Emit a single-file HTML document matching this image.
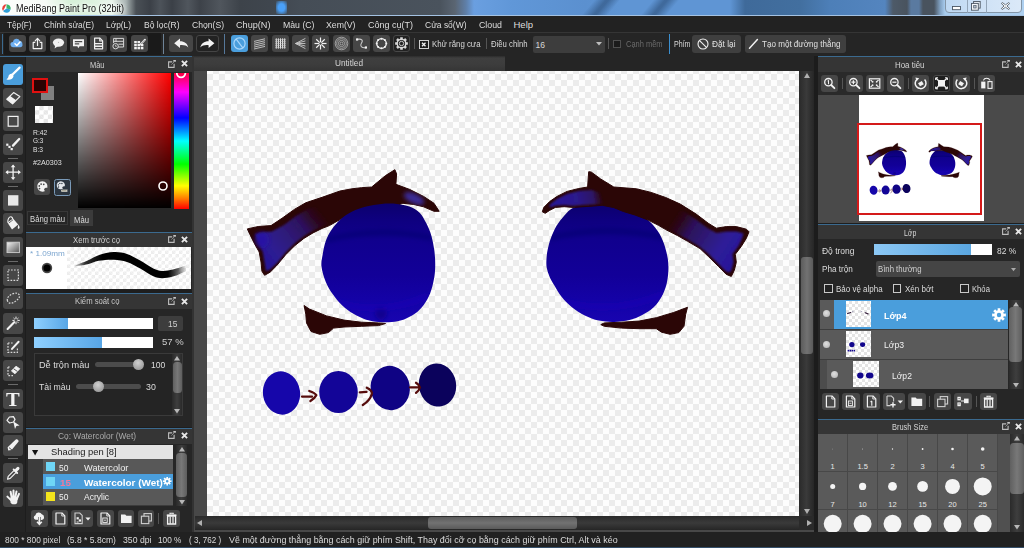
<!DOCTYPE html>
<html><head><meta charset="utf-8"><title>MediBang Paint Pro</title>
<style>
*{box-sizing:border-box;margin:0;padding:0}
html,body{width:1024px;height:548px;overflow:hidden;background:#1e1e1e;font-family:"Liberation Sans","DejaVu Sans",sans-serif;font-size:9px;color:#dcdcdc}
.a{position:absolute}
.t{position:absolute;white-space:nowrap;transform-origin:0 0}
svg{overflow:visible}

</style></head><body>
<div class="a" style="left:0px;top:0px;width:1024px;height:16px;background:linear-gradient(90deg,#fcfefc 0,#f6fbf6 45px,#d6f0d8 70px,#dcf2de 92px,#e8f4ea 112px,#a9b3b3 126px,#4a5056 136px,#3b4047 150px,#4d535a 160px,#3b4047 172px,#50565d 188px,#3d4249 200px,#50565d 220px,#3d434a 240px,#3f464e 270px,#454d56 300px,#4a535d 440px,#5a6572 455px,#5f7fa8 466px,#6a9fe0 474px,#6097d8 512px,#5b90cf 585px,#5f95d4 620px,#5f95d4 730px,#3f6a9a 745px,#426f9f 800px,#4d7fb8 830px,#5485bf 885px,#4d5a68 893px,#49535e 907px,#5a7aa0 911px,#5a7aa0 919px,#49535e 923px,#49535e 934px,#7f9fbf 940px,#a8ccee 945px,#aed0f0 1024px);"></div>
<div class="a" style="left:276px;top:1px;width:11px;height:13px;background:radial-gradient(ellipse at center,#4aa0f8 0,#4aa0f8 40%,rgba(74,160,248,0) 100%);"></div>
<div class="a" style="left:588px;top:0px;width:26px;height:15px;background:linear-gradient(90deg,rgba(58,98,146,0),rgba(58,98,146,.85) 45%,rgba(58,98,146,.85) 55%,rgba(58,98,146,0));transform:skewX(-40deg);"></div>
<div class="a" style="left:647px;top:0px;width:26px;height:15px;background:linear-gradient(90deg,rgba(58,98,146,0),rgba(58,98,146,.85) 45%,rgba(58,98,146,.85) 55%,rgba(58,98,146,0));transform:skewX(-40deg);"></div>
<div class="a" style="left:0px;top:14.7px;width:1024px;height:1.1px;background:#a4c2e2;"></div>
<svg class="a" style="left:1px;top:3px;" width="11" height="11" viewBox="0 0 11 11"><circle cx="5.5" cy="5.5" r="5.3" fill="#fff"/><path d="M5.5 1.2A4.3 4.3 0 0 0 2 8z" fill="#e8413a"/><path d="M5.5 1.2A4.3 4.3 0 0 1 9.6 6.5L5.5 5.5z" fill="#38b56a"/><path d="M2 8A4.3 4.3 0 0 0 9.6 6.5L5.5 5.5z" fill="#2e9fd8"/></svg>
<span class="t" style="left:16.00px;top:3.21px;font-size:10.5px;line-height:10.5px;color:#101010;transform:scaleX(0.8566);text-shadow:0 0 4px #fff,0 0 6px #fff;">MediBang Paint Pro (32bit)</span>
<div class="a" style="left:945px;top:-1px;width:77.4px;height:14.4px;background:linear-gradient(90deg,#bed8f2,#cfe2f6 50%,#dbe9f8);border-radius:0 0 4px 4px;border:1px solid #8496a8;"></div>
<div class="a" style="left:966.5px;top:0px;width:1px;height:13px;background:#93a5b8;"></div>
<div class="a" style="left:986.3px;top:0px;width:1px;height:13px;background:#93a5b8;"></div>
<svg class="a" style="left:952px;top:5.6px;" width="9" height="4.4" viewBox="0 0 9 4.4"><rect x="0.5" y="0.5" width="8" height="3.2" fill="#fff" stroke="#4a5562" stroke-width="0.9"/></svg>
<svg class="a" style="left:971px;top:1.2px;" width="10" height="10" viewBox="0 0 10 10"><rect x="2.6" y="0.5" width="6.6" height="6.6" fill="#e8eef5" stroke="#4a5562" stroke-width="0.9"/><rect x="0.5" y="2.4" width="6.8" height="6.8" fill="#f4f7fa" stroke="#4a5562" stroke-width="0.9"/><rect x="2.7" y="4.6" width="2.4" height="2.4" fill="#b8c6d4" stroke="#4a5562" stroke-width="0.7"/></svg>
<svg class="a" style="left:1000.6px;top:2px;" width="9" height="8" viewBox="0 0 9 8"><path d="M1.2 0.5L4.5 2.8 7.8 0.5 8.6 1.6 5.9 4 8.6 6.4 7.8 7.5 4.5 5.2 1.2 7.5 0.4 6.4 3.1 4 0.4 1.6z" fill="#fff" stroke="#4a5562" stroke-width="0.8" stroke-linejoin="round"/></svg>
<div class="a" style="left:0px;top:16px;width:1024px;height:16px;background:#222222;"></div>
<span class="t" style="left:6.80px;top:20.26px;font-size:9.5px;line-height:9.5px;color:#dedede;transform:scaleX(0.8632);">Tệp(F)</span>
<span class="t" style="left:43.50px;top:20.26px;font-size:9.5px;line-height:9.5px;color:#dedede;transform:scaleX(0.8845);">Chỉnh sửa(E)</span>
<span class="t" style="left:106.00px;top:20.26px;font-size:9.5px;line-height:9.5px;color:#dedede;transform:scaleX(0.8796);">Lớp(L)</span>
<span class="t" style="left:143.50px;top:20.26px;font-size:9.5px;line-height:9.5px;color:#dedede;transform:scaleX(0.8966);">Bộ lọc(R)</span>
<span class="t" style="left:191.50px;top:20.26px;font-size:9.5px;line-height:9.5px;color:#dedede;transform:scaleX(0.9046);">Chọn(S)</span>
<span class="t" style="left:235.50px;top:20.26px;font-size:9.5px;line-height:9.5px;color:#dedede;transform:scaleX(0.9608);">Chụp(N)</span>
<span class="t" style="left:282.50px;top:20.26px;font-size:9.5px;line-height:9.5px;color:#dedede;transform:scaleX(0.9180);">Màu (C)</span>
<span class="t" style="left:326.00px;top:20.26px;font-size:9.5px;line-height:9.5px;color:#dedede;transform:scaleX(0.9161);">Xem(V)</span>
<span class="t" style="left:367.50px;top:20.26px;font-size:9.5px;line-height:9.5px;color:#dedede;transform:scaleX(0.9471);">Công cụ(T)</span>
<span class="t" style="left:424.50px;top:20.26px;font-size:9.5px;line-height:9.5px;color:#dedede;transform:scaleX(0.8928);">Cửa sổ(W)</span>
<span class="t" style="left:478.50px;top:20.26px;font-size:9.5px;line-height:9.5px;color:#dedede;transform:scaleX(0.9264);">Cloud</span>
<span class="t" style="left:513.50px;top:20.26px;font-size:9.5px;line-height:9.5px;color:#dedede;">Help</span>
<div class="a" style="left:0px;top:32px;width:1024px;height:24px;background:#252525;"></div>
<div class="a" style="left:0px;top:32px;width:1024px;height:0.6px;background:#353535;"></div>
<div class="a" style="left:3.5px;top:33px;width:157px;height:22.3px;background:#1a1a1a;"></div>
<div class="a" style="left:2px;top:34px;width:1px;height:20px;background:#3b6a8f;"></div>
<div class="a" style="left:9.0px;top:35.2px;width:17px;height:17.2px;background:#464646;border-radius:3px;"></div>
<div class="a" style="left:29.25px;top:35.2px;width:17px;height:17.2px;background:#464646;border-radius:3px;"></div>
<div class="a" style="left:49.5px;top:35.2px;width:17px;height:17.2px;background:#464646;border-radius:3px;"></div>
<div class="a" style="left:69.75px;top:35.2px;width:17px;height:17.2px;background:#464646;border-radius:3px;"></div>
<div class="a" style="left:90.0px;top:35.2px;width:17px;height:17.2px;background:#464646;border-radius:3px;"></div>
<div class="a" style="left:110.25px;top:35.2px;width:17px;height:17.2px;background:#464646;border-radius:3px;"></div>
<div class="a" style="left:130.5px;top:35.2px;width:17px;height:17.2px;background:#464646;border-radius:3px;"></div>
<div class="a" style="left:163px;top:34px;width:1px;height:20px;background:#6f8498;"></div>
<div class="a" style="left:169.4px;top:35.2px;width:23.4px;height:17.2px;background:#464646;border-radius:3px;"></div>
<div class="a" style="left:196.3px;top:35.2px;width:22.7px;height:17.2px;background:#222;border-radius:3px;border:1px solid #454545;"></div>
<div class="a" style="left:224px;top:34px;width:1px;height:20px;background:#56789a;"></div>
<div class="a" style="left:231.0px;top:35.2px;width:17px;height:17.2px;background:#4a9edc;border-radius:3px;"></div>
<div class="a" style="left:251.3px;top:35.2px;width:17px;height:17.2px;background:#464646;border-radius:3px;"></div>
<div class="a" style="left:271.6px;top:35.2px;width:17px;height:17.2px;background:#464646;border-radius:3px;"></div>
<div class="a" style="left:291.9px;top:35.2px;width:17px;height:17.2px;background:#464646;border-radius:3px;"></div>
<div class="a" style="left:312.2px;top:35.2px;width:17px;height:17.2px;background:#464646;border-radius:3px;"></div>
<div class="a" style="left:332.5px;top:35.2px;width:17px;height:17.2px;background:#464646;border-radius:3px;"></div>
<div class="a" style="left:352.8px;top:35.2px;width:17px;height:17.2px;background:#464646;border-radius:3px;"></div>
<div class="a" style="left:373.1px;top:35.2px;width:17px;height:17.2px;background:#464646;border-radius:3px;"></div>
<div class="a" style="left:393.4px;top:35.2px;width:17px;height:17.2px;background:#222;border-radius:3px;border:1px solid #484848;"></div>
<div class="a" style="left:414px;top:38px;width:1px;height:11px;background:#555;"></div>
<div class="a" style="left:419px;top:39.5px;width:9.5px;height:9px;background:#1b1b1b;border:1px solid #cfcfcf;"></div>
<span class="t" style="left:431.60px;top:40.18px;font-size:9px;line-height:9px;color:#d8d8d8;transform:scaleX(0.8726);">Khử răng cưa</span>
<div class="a" style="left:485.5px;top:38px;width:1px;height:11px;background:#555;"></div>
<span class="t" style="left:491.40px;top:40.18px;font-size:9px;line-height:9px;color:#d8d8d8;transform:scaleX(0.8605);">Điều chỉnh</span>
<div class="a" style="left:532.5px;top:35.5px;width:72px;height:17.5px;background:#3d3d3d;border-radius:2px;"></div>
<span class="t" style="left:535.50px;top:40.60px;font-size:8.5px;line-height:8.5px;color:#d8d8d8;">16</span>
<svg class="a" style="left:596px;top:42px;" width="6" height="4" viewBox="0 0 6 4"><path d="M0 0H6L3 3.5z" fill="#bdbdbd"/></svg>
<div class="a" style="left:607.5px;top:38px;width:1px;height:11px;background:#555;"></div>
<div class="a" style="left:613px;top:40px;width:8px;height:8px;background:#1b1b1b;border:1px solid #505050;"></div>
<span class="t" style="left:625.60px;top:40.18px;font-size:9px;line-height:9px;color:#6b6b6b;transform:scaleX(0.8293);">Cạnh mềm</span>
<div class="a" style="left:669px;top:34px;width:1px;height:20px;background:#3b8fcf;"></div>
<span class="t" style="left:674.00px;top:40.18px;font-size:9px;line-height:9px;color:#d8d8d8;transform:scaleX(0.7851);">Phím</span>
<div class="a" style="left:692px;top:35px;width:49px;height:17.5px;background:#3f3f3f;border-radius:3px;"></div>
<span class="t" style="left:712.00px;top:40.18px;font-size:9px;line-height:9px;color:#e0e0e0;transform:scaleX(0.9210);">Đặt lại</span>
<div class="a" style="left:744.5px;top:35px;width:101px;height:17.5px;background:#3f3f3f;border-radius:3px;"></div>
<span class="t" style="left:762.00px;top:40.18px;font-size:9px;line-height:9px;color:#e0e0e0;transform:scaleX(0.8973);">Tạo một đường thẳng</span>
<div class="a" style="left:0px;top:56px;width:26px;height:476px;background:#242424;"></div>
<div class="a" style="left:24.8px;top:56px;width:1.4px;height:476px;background:#1d1d1d;"></div>
<div class="a" style="left:0px;top:56px;width:26px;height:1px;background:#3b6a8f;"></div>
<div class="a" style="left:3px;top:64.3px;width:20.3px;height:20.5px;background:#4a9edc;border-radius:3px;"></div>
<div class="a" style="left:3px;top:87.7px;width:20.3px;height:20.5px;background:#474747;border-radius:3px;"></div>
<div class="a" style="left:3px;top:110.9px;width:20.3px;height:20.5px;background:#474747;border-radius:3px;"></div>
<div class="a" style="left:3px;top:134.2px;width:20.3px;height:20.5px;background:#474747;border-radius:3px;"></div>
<div class="a" style="left:3px;top:162.3px;width:20.3px;height:20.5px;background:#474747;border-radius:3px;"></div>
<div class="a" style="left:3px;top:190.2px;width:20.3px;height:20.5px;background:#474747;border-radius:3px;"></div>
<div class="a" style="left:3px;top:213.4px;width:20.3px;height:20.5px;background:#474747;border-radius:3px;"></div>
<div class="a" style="left:3px;top:236.6px;width:20.3px;height:20.5px;background:#474747;border-radius:3px;"></div>
<div class="a" style="left:3px;top:265px;width:20.3px;height:20.5px;background:#474747;border-radius:3px;"></div>
<div class="a" style="left:3px;top:288.2px;width:20.3px;height:20.5px;background:#474747;border-radius:3px;"></div>
<div class="a" style="left:3px;top:313.3px;width:20.3px;height:20.5px;background:#474747;border-radius:3px;"></div>
<div class="a" style="left:3px;top:336.8px;width:20.3px;height:20.5px;background:#474747;border-radius:3px;"></div>
<div class="a" style="left:3px;top:360.3px;width:20.3px;height:20.5px;background:#474747;border-radius:3px;"></div>
<div class="a" style="left:3px;top:388.7px;width:20.3px;height:20.5px;background:#474747;border-radius:3px;"></div>
<div class="a" style="left:3px;top:412px;width:20.3px;height:20.5px;background:#474747;border-radius:3px;"></div>
<div class="a" style="left:3px;top:435.2px;width:20.3px;height:20.5px;background:#474747;border-radius:3px;"></div>
<div class="a" style="left:3px;top:462.8px;width:20.3px;height:20.5px;background:#474747;border-radius:3px;"></div>
<div class="a" style="left:3px;top:486.5px;width:20.3px;height:20.5px;background:#474747;border-radius:3px;"></div>
<div class="a" style="left:8px;top:158.3px;width:10px;height:1px;background:#6a6a6a;"></div>
<div class="a" style="left:8px;top:186px;width:10px;height:1px;background:#6a6a6a;"></div>
<div class="a" style="left:8px;top:260.5px;width:10px;height:1px;background:#6a6a6a;"></div>
<div class="a" style="left:8px;top:384px;width:10px;height:1px;background:#6a6a6a;"></div>
<div class="a" style="left:8px;top:458.3px;width:10px;height:1px;background:#6a6a6a;"></div>
<div class="a" style="left:26px;top:56px;width:165.5px;height:175.5px;background:#262626;"></div>
<div class="a" style="left:26px;top:56px;width:165.5px;height:16px;background:#353535;"></div>
<div class="a" style="left:26px;top:56px;width:165.5px;height:1px;background:#3b6a8f;"></div>
<svg class="a" style="left:168.2px;top:59.8px;" width="8" height="8" viewBox="0 0 8 8"><path d="M4.2 1.9H0.6V7.4H6.1V3.8" fill="none" stroke="#bdbdbd" stroke-width="1.1"/><rect x="5.3" y="0" width="2.6" height="1.7" fill="#c8c8c8"/><path d="M3.4 4.6L6 2" stroke="#9a9a9a" stroke-width="0.8"/></svg>
<svg class="a" style="left:180.79999999999998px;top:60.4px;" width="7" height="7" viewBox="0 0 7 7"><path d="M0.9 0.9L6.1 6.1M6.1 0.9L0.9 6.1" stroke="#e8e8e8" stroke-width="1.9"/></svg>
<span class="t" style="left:89.75px;top:61.18px;font-size:9px;line-height:9px;color:#d0d0d0;transform:scaleX(0.8278);">Màu</span>
<div class="a" style="left:26px;top:231.5px;width:165.5px;height:57.5px;background:#262626;"></div>
<div class="a" style="left:26px;top:231.5px;width:165.5px;height:15px;background:#353535;"></div>
<div class="a" style="left:26px;top:231.5px;width:165.5px;height:1px;background:#3b6a8f;"></div>
<svg class="a" style="left:168.2px;top:235.3px;" width="8" height="8" viewBox="0 0 8 8"><path d="M4.2 1.9H0.6V7.4H6.1V3.8" fill="none" stroke="#bdbdbd" stroke-width="1.1"/><rect x="5.3" y="0" width="2.6" height="1.7" fill="#c8c8c8"/><path d="M3.4 4.6L6 2" stroke="#9a9a9a" stroke-width="0.8"/></svg>
<svg class="a" style="left:180.79999999999998px;top:235.9px;" width="7" height="7" viewBox="0 0 7 7"><path d="M0.9 0.9L6.1 6.1M6.1 0.9L0.9 6.1" stroke="#e8e8e8" stroke-width="1.9"/></svg>
<div class="a" style="left:26px;top:293.4px;width:165.5px;height:134px;background:#262626;"></div>
<div class="a" style="left:26px;top:293.4px;width:165.5px;height:16px;background:#353535;"></div>
<div class="a" style="left:26px;top:293.4px;width:165.5px;height:1px;background:#3b6a8f;"></div>
<svg class="a" style="left:168.2px;top:297.2px;" width="8" height="8" viewBox="0 0 8 8"><path d="M4.2 1.9H0.6V7.4H6.1V3.8" fill="none" stroke="#bdbdbd" stroke-width="1.1"/><rect x="5.3" y="0" width="2.6" height="1.7" fill="#c8c8c8"/><path d="M3.4 4.6L6 2" stroke="#9a9a9a" stroke-width="0.8"/></svg>
<svg class="a" style="left:180.79999999999998px;top:297.8px;" width="7" height="7" viewBox="0 0 7 7"><path d="M0.9 0.9L6.1 6.1M6.1 0.9L0.9 6.1" stroke="#e8e8e8" stroke-width="1.9"/></svg>
<div class="a" style="left:26px;top:427.6px;width:165.5px;height:104.4px;background:#262626;"></div>
<div class="a" style="left:26px;top:427.6px;width:165.5px;height:16px;background:#353535;"></div>
<div class="a" style="left:26px;top:427.6px;width:165.5px;height:1px;background:#3b6a8f;"></div>
<svg class="a" style="left:168.2px;top:431.40000000000003px;" width="8" height="8" viewBox="0 0 8 8"><path d="M4.2 1.9H0.6V7.4H6.1V3.8" fill="none" stroke="#bdbdbd" stroke-width="1.1"/><rect x="5.3" y="0" width="2.6" height="1.7" fill="#c8c8c8"/><path d="M3.4 4.6L6 2" stroke="#9a9a9a" stroke-width="0.8"/></svg>
<svg class="a" style="left:180.79999999999998px;top:432.00000000000006px;" width="7" height="7" viewBox="0 0 7 7"><path d="M0.9 0.9L6.1 6.1M6.1 0.9L0.9 6.1" stroke="#e8e8e8" stroke-width="1.9"/></svg>
<div class="a" style="left:191.5px;top:56px;width:2.5px;height:476px;background:#333;"></div>
<div class="a" style="left:193.8px;top:56px;width:622.2px;height:476px;background:#484848;"></div>
<div class="a" style="left:194px;top:56px;width:622px;height:15px;background:#252525;"></div>
<div class="a" style="left:194px;top:56px;width:311px;height:14.7px;background:linear-gradient(#2c2c2c 0,#3f3f3f 14%,#3c3c3c 60%,#353535);"></div>
<span class="t" style="left:335.00px;top:59.28px;font-size:9px;line-height:9px;color:#d6d6d6;transform:scaleX(0.9176);">Untitled</span>
<div class="a" style="left:207px;top:71px;width:592px;height:445px;background:repeating-conic-gradient(#ececec 0 25%,#fdfdfd 0 50%) 6px 3px/12px 12px;"></div>
<div class="a" style="left:817.5px;top:56.3px;width:208px;height:167.2px;background:#262626;"></div>
<div class="a" style="left:817.5px;top:56.3px;width:208px;height:15.5px;background:#353535;"></div>
<div class="a" style="left:817.5px;top:56.3px;width:208px;height:1px;background:#3b6a8f;"></div>
<svg class="a" style="left:1002.2px;top:60.099999999999994px;" width="8" height="8" viewBox="0 0 8 8"><path d="M4.2 1.9H0.6V7.4H6.1V3.8" fill="none" stroke="#bdbdbd" stroke-width="1.1"/><rect x="5.3" y="0" width="2.6" height="1.7" fill="#c8c8c8"/><path d="M3.4 4.6L6 2" stroke="#9a9a9a" stroke-width="0.8"/></svg>
<svg class="a" style="left:1014.8000000000001px;top:60.699999999999996px;" width="7" height="7" viewBox="0 0 7 7"><path d="M0.9 0.9L6.1 6.1M6.1 0.9L0.9 6.1" stroke="#e8e8e8" stroke-width="1.9"/></svg>
<div class="a" style="left:817.5px;top:223.5px;width:208px;height:195px;background:#262626;"></div>
<div class="a" style="left:817.5px;top:223.5px;width:208px;height:15.5px;background:#353535;"></div>
<div class="a" style="left:817.5px;top:223.5px;width:208px;height:1px;background:#3b6a8f;"></div>
<svg class="a" style="left:1002.2px;top:227.3px;" width="8" height="8" viewBox="0 0 8 8"><path d="M4.2 1.9H0.6V7.4H6.1V3.8" fill="none" stroke="#bdbdbd" stroke-width="1.1"/><rect x="5.3" y="0" width="2.6" height="1.7" fill="#c8c8c8"/><path d="M3.4 4.6L6 2" stroke="#9a9a9a" stroke-width="0.8"/></svg>
<svg class="a" style="left:1014.8000000000001px;top:227.9px;" width="7" height="7" viewBox="0 0 7 7"><path d="M0.9 0.9L6.1 6.1M6.1 0.9L0.9 6.1" stroke="#e8e8e8" stroke-width="1.9"/></svg>
<div class="a" style="left:817.5px;top:418.5px;width:208px;height:113.5px;background:#262626;"></div>
<div class="a" style="left:817.5px;top:418.5px;width:208px;height:15.5px;background:#353535;"></div>
<div class="a" style="left:817.5px;top:418.5px;width:208px;height:1px;background:#3b6a8f;"></div>
<svg class="a" style="left:1002.2px;top:422.3px;" width="8" height="8" viewBox="0 0 8 8"><path d="M4.2 1.9H0.6V7.4H6.1V3.8" fill="none" stroke="#bdbdbd" stroke-width="1.1"/><rect x="5.3" y="0" width="2.6" height="1.7" fill="#c8c8c8"/><path d="M3.4 4.6L6 2" stroke="#9a9a9a" stroke-width="0.8"/></svg>
<svg class="a" style="left:1014.8000000000001px;top:422.90000000000003px;" width="7" height="7" viewBox="0 0 7 7"><path d="M0.9 0.9L6.1 6.1M6.1 0.9L0.9 6.1" stroke="#e8e8e8" stroke-width="1.9"/></svg>
<div class="a" style="left:0px;top:531.7px;width:1024px;height:16.3px;background:#212121;"></div>
<span class="t" style="left:4.70px;top:535.68px;font-size:9px;line-height:9px;color:#dcdcdc;transform:scaleX(0.9287);">800 * 800 pixel</span>
<span class="t" style="left:66.80px;top:535.68px;font-size:9px;line-height:9px;color:#dcdcdc;transform:scaleX(0.9489);">(5.8 * 5.8cm)</span>
<span class="t" style="left:123.00px;top:535.68px;font-size:9px;line-height:9px;color:#dcdcdc;transform:scaleX(0.9651);">350 dpi</span>
<span class="t" style="left:158.20px;top:535.68px;font-size:9px;line-height:9px;color:#dcdcdc;transform:scaleX(0.9204);">100 %</span>
<span class="t" style="left:189.00px;top:535.68px;font-size:9px;line-height:9px;color:#dcdcdc;transform:scaleX(0.8937);">( 3, 762 )</span>
<span class="t" style="left:229.40px;top:535.68px;font-size:9px;line-height:9px;color:#dcdcdc;transform:scaleX(0.9903);">Vẽ một đường thẳng bằng cách giữ phím Shift, Thay đổi cỡ cọ bằng cách giữ phím Ctrl, Alt và kéo</span>
<div class="a" style="left:0px;top:546.5px;width:1024px;height:1.5px;background:#35506b;"></div>
<div class="a" style="left:799px;top:516px;width:15px;height:14.4px;background:#2a2a2a;"></div>
<div class="a" style="left:799px;top:71px;width:15px;height:445px;background:linear-gradient(90deg,#2a2a2a,#3a3a3a 50%,#262626);"></div>
<div class="a" style="left:800.6px;top:257px;width:12.2px;height:96.6px;background:linear-gradient(90deg,#5c5c5c,#727272 50%,#5a5a5a);border-radius:3px;"></div>
<svg class="a" style="left:803.5px;top:72.5px;" width="6" height="5" viewBox="0 0 6 5"><path d="M0 5L3 0 6 5z" fill="#b0b0b0"/></svg>
<svg class="a" style="left:803.5px;top:509px;" width="6" height="5" viewBox="0 0 6 5"><path d="M0 0L3 5 6 0z" fill="#b0b0b0"/></svg>
<div class="a" style="left:194.6px;top:516px;width:604.4px;height:14.4px;background:linear-gradient(#2a2a2a,#3a3a3a 50%,#262626);"></div>
<div class="a" style="left:427.5px;top:517.2px;width:149.2px;height:12.3px;background:linear-gradient(#5c5c5c,#727272 50%,#5a5a5a);border-radius:3px;"></div>
<svg class="a" style="left:196.5px;top:520px;" width="5" height="6" viewBox="0 0 5 6"><path d="M5 0L0 3 5 6z" fill="#b0b0b0"/></svg>
<svg class="a" style="left:807px;top:520px;" width="5" height="6" viewBox="0 0 5 6"><path d="M0 0L5 3 0 6z" fill="#b0b0b0"/></svg>
<div class="a" style="left:814px;top:56px;width:4px;height:476px;background:#1c1c1c;"></div>
<div class="a" style="left:40.5px;top:85.5px;width:13.5px;height:14.3px;background:#808080;"></div>
<div class="a" style="left:32.4px;top:78px;width:15.3px;height:15.3px;background:#2a0303;border:2px solid #e01010;"></div>
<div class="a" style="left:35px;top:106.3px;width:17.5px;height:17.2px;background-color:#fff;background-image:linear-gradient(45deg,#e6e6e6 25%,transparent 25%,transparent 75%,#e6e6e6 75%),linear-gradient(45deg,#e6e6e6 25%,transparent 25%,transparent 75%,#e6e6e6 75%);background-size:8.6px 8.6px;background-position:0 0,4.3px 4.3px;"></div>
<span class="t" style="left:32.60px;top:129.44px;font-size:7.4px;line-height:7.4px;color:#e0e0e0;transform:scaleX(0.9152);">R:42</span>
<span class="t" style="left:32.60px;top:137.24px;font-size:7.4px;line-height:7.4px;color:#e0e0e0;transform:scaleX(0.8723);">G:3</span>
<span class="t" style="left:32.60px;top:145.84px;font-size:7.4px;line-height:7.4px;color:#e0e0e0;transform:scaleX(0.9104);">B:3</span>
<span class="t" style="left:32.60px;top:159.14px;font-size:7.4px;line-height:7.4px;color:#e0e0e0;transform:scaleX(0.9698);">#2A0303</span>
<div class="a" style="left:33.8px;top:178.8px;width:16.7px;height:16.6px;background:#474747;border-radius:3px;"></div>
<div class="a" style="left:54px;top:178.8px;width:17.4px;height:16.9px;background:#2c3640;border-radius:2.5px;border:1px solid #7a9ab8;"></div>
<div class="a" style="left:77.5px;top:73px;width:93.5px;height:134.5px;background:linear-gradient(to top,#000,rgba(0,0,0,0)),linear-gradient(to right,#fff,#f00);"></div>
<svg class="a" style="left:156.5px;top:180px;" width="12" height="12" viewBox="0 0 12 12"><circle cx="6" cy="6" r="4" fill="none" stroke="#fff" stroke-width="1.6"/></svg>
<div class="a" style="left:174.4px;top:73px;width:14.2px;height:136px;background:linear-gradient(to bottom,#ff0040 0,#ff00ff 14%,#0000ff 33%,#00ffff 50%,#00ff00 67%,#ffff00 83%,#ff8000 92%,#ff0000 100%);"></div>
<svg class="a" style="left:174.4px;top:73px;overflow:hidden" width="14.2" height="12" viewBox="0 0 14.2 12"><circle cx="7.1" cy="0" r="4.3" fill="none" stroke="#fff" stroke-width="1.7"/></svg>
<div class="a" style="left:27.4px;top:210.5px;width:41px;height:14.5px;background:#252525;border:1px solid #383838;"></div>
<div class="a" style="left:69.7px;top:210px;width:23.3px;height:16.3px;background:#3b3b3b;"></div>
<span class="t" style="left:30.20px;top:215.30px;font-size:8.5px;line-height:8.5px;color:#dcdcdc;transform:scaleX(0.9058);">Bảng màu</span>
<span class="t" style="left:73.80px;top:215.90px;font-size:8.5px;line-height:8.5px;color:#dcdcdc;transform:scaleX(0.9005);">Màu</span>
<span class="t" style="left:73.00px;top:236.28px;font-size:9px;line-height:9px;color:#d0d0d0;transform:scaleX(0.8555);">Xem trước cọ</span>
<div class="a" style="left:26.3px;top:247px;width:40.7px;height:41.7px;background:#fff;"></div>
<div class="a" style="left:67px;top:247px;width:124px;height:41.7px;background-color:#fff;background-image:linear-gradient(45deg,#ededed 25%,transparent 25%,transparent 75%,#ededed 75%),linear-gradient(45deg,#ededed 25%,transparent 25%,transparent 75%,#ededed 75%);background-size:7px 7px;background-position:0 0,3.5px 3.5px;"></div>
<span class="t" style="left:30.20px;top:250.33px;font-size:8px;line-height:8px;color:#7da6cf;transform:scaleX(1.0165);">* 1.09mm</span>
<svg class="a" style="left:40px;top:261px;" width="14" height="14" viewBox="0 0 14 14"><defs><filter id="bd"><feGaussianBlur stdDeviation="0.5"/></filter></defs><circle cx="7" cy="7" r="5.2" fill="#444" filter="url(#bd)"/><circle cx="7" cy="7" r="3.6" fill="#000"/></svg>
<svg class="a" style="left:67px;top:247px;overflow:hidden" width="124" height="41.7" viewBox="67 247 124 41.7"><defs><filter id="bs" x="-10%" y="-50%" width="120%" height="200%"><feGaussianBlur stdDeviation="0.6"/></filter><linearGradient id="sg" x1="74" x2="186" gradientUnits="userSpaceOnUse"><stop offset="0" stop-color="#000" stop-opacity="0.1"/><stop offset="0.1" stop-color="#000" stop-opacity="0.8"/><stop offset="0.25" stop-color="#000"/><stop offset="0.84" stop-color="#000"/><stop offset="0.93" stop-color="#000" stop-opacity="0.6"/><stop offset="1" stop-color="#000" stop-opacity="0.05"/></linearGradient></defs><path d="M75.0 265.5C77.1 264.7 83.7 262.2 87.6 260.5C91.5 258.8 94.2 256.6 98.6 255.2C103.0 253.8 109.2 252.3 113.9 252.1C118.6 251.9 122.6 252.6 127.0 254.0C131.4 255.4 135.8 258.2 140.2 260.6C144.6 263.0 149.7 266.8 153.3 268.5C157.0 270.2 158.8 270.8 162.1 271.0C165.4 271.2 169.0 270.5 173.0 269.6C177.0 268.7 183.8 266.3 186.0 265.6L186.0 271.3C183.8 272.2 177.0 275.5 173.0 276.6C169.0 277.8 165.4 278.2 162.1 278.2C158.8 278.1 157.0 277.9 153.3 276.3C149.7 274.7 144.6 271.0 140.2 268.6C135.8 266.2 131.4 263.5 127.0 262.0C122.6 260.5 118.6 259.9 113.9 259.7C109.2 259.5 103.0 260.0 98.6 260.8C94.2 261.6 91.5 263.4 87.6 264.3C83.7 265.2 77.1 266.1 75.0 266.5Z" fill="url(#sg)" filter="url(#bs)"/></svg>
<span class="t" style="left:74.70px;top:297.48px;font-size:9px;line-height:9px;color:#c8c8c8;transform:scaleX(0.8553);">Kiểm soát cọ</span>
<div class="a" style="left:33.5px;top:318px;width:119.5px;height:11.1px;background:#fff;"></div>
<div class="a" style="left:33.5px;top:318px;width:34px;height:11.1px;background:linear-gradient(90deg,#8fd0ff,#58a6e6);"></div>
<div class="a" style="left:157.9px;top:316.3px;width:25.4px;height:14.7px;background:#3d3d3d;border-radius:2px;"></div>
<span class="t" style="left:168.20px;top:320.38px;font-size:9px;line-height:9px;color:#cfcfcf;transform:scaleX(0.9385);">15</span>
<div class="a" style="left:33.5px;top:336.8px;width:119.5px;height:11px;background:#fff;"></div>
<div class="a" style="left:33.5px;top:336.8px;width:68.3px;height:11px;background:linear-gradient(90deg,#8fd0ff,#58a6e6);"></div>
<span class="t" style="left:161.60px;top:338.38px;font-size:9px;line-height:9px;color:#cfcfcf;transform:scaleX(1.0577);">57 %</span>
<div class="a" style="left:33.5px;top:353.3px;width:149.8px;height:62.7px;background:#242424;border:1px solid #3a3a3a;"></div>
<span class="t" style="left:39.00px;top:360.98px;font-size:9px;line-height:9px;color:#dcdcdc;transform:scaleX(1.0175);">Dễ trộn màu</span>
<div class="a" style="left:95.1px;top:361.5px;width:48px;height:5.6px;background:#4c4c4c;border-radius:3px;"></div>
<div class="a" style="left:133.3px;top:358.9px;width:10.8px;height:10.8px;background:radial-gradient(circle at 45% 35%,#d0d0d0,#8a8a8a);border-radius:50%;"></div>
<span class="t" style="left:150.50px;top:360.98px;font-size:9px;line-height:9px;color:#dcdcdc;transform:scaleX(0.9514);">100</span>
<span class="t" style="left:39.00px;top:382.68px;font-size:9px;line-height:9px;color:#dcdcdc;transform:scaleX(0.9688);">Tài màu</span>
<div class="a" style="left:76.1px;top:383.7px;width:64.6px;height:5.6px;background:#4c4c4c;border-radius:3px;"></div>
<div class="a" style="left:92.9px;top:381.1px;width:10.8px;height:10.8px;background:radial-gradient(circle at 45% 35%,#d0d0d0,#8a8a8a);border-radius:50%;"></div>
<span class="t" style="left:145.60px;top:382.68px;font-size:9px;line-height:9px;color:#dcdcdc;transform:scaleX(0.9785);">30</span>
<div class="a" style="left:172.2px;top:354.3px;width:10.3px;height:60.7px;background:linear-gradient(90deg,#2a2a2a,#3e3e3e 50%,#2a2a2a);"></div>
<div class="a" style="left:172.5px;top:361.9px;width:9.700000000000001px;height:30.80000000000001px;background:linear-gradient(90deg,#606060,#787878 50%,#5e5e5e);border-radius:3.5px;"></div>
<svg class="a" style="left:174.35px;top:356.3px;" width="6" height="4.5" viewBox="0 0 6 4.5"><path d="M0 4.5L3 0 6 4.5z" fill="#b8b8b8"/></svg>
<svg class="a" style="left:174.35px;top:408.5px;" width="6" height="4.5" viewBox="0 0 6 4.5"><path d="M0 0L3 4.5 6 0z" fill="#b8b8b8"/></svg>
<span class="t" style="left:57.70px;top:431.88px;font-size:9px;line-height:9px;color:#ababab;transform:scaleX(0.9284);">Cọ: Watercolor (Wet)</span>
<div class="a" style="left:28.1px;top:445px;width:145.3px;height:61.4px;background:#3c3c3c;"></div>
<div class="a" style="left:28.1px;top:445px;width:145.3px;height:14px;background:#e4e4e4;"></div>
<svg class="a" style="left:32.3px;top:449.5px;" width="6.2" height="5.4" viewBox="0 0 6.2 5.4"><path d="M0 0H6.2L3.1 5.4z" fill="#111"/></svg>
<span class="t" style="left:50.80px;top:448.38px;font-size:9px;line-height:9px;color:#1a1a1a;transform:scaleX(1.0418);">Shading pen [8]</span>
<div class="a" style="left:43.4px;top:459px;width:130px;height:14.9px;background:#585858;"></div>
<div class="a" style="left:45.9px;top:462.3px;width:9.3px;height:9.1px;background:#6fd6f6;"></div>
<span class="t" style="left:59.40px;top:463.68px;font-size:9px;line-height:9px;color:#f0f0f0;transform:scaleX(0.9385);">50</span>
<span class="t" style="left:83.50px;top:463.68px;font-size:9px;line-height:9px;color:#f0f0f0;transform:scaleX(1.0281);">Watercolor</span>
<div class="a" style="left:43.4px;top:473.9px;width:130px;height:15.2px;background:#4a9edc;"></div>
<div class="a" style="left:45.9px;top:476.8px;width:9.3px;height:9.1px;background:#6fd6f6;"></div>
<span class="t" style="left:60.10px;top:477.96px;font-size:9.5px;line-height:9.5px;color:#ee7a9e;font-weight:bold;transform:scaleX(1.0304);">15</span>
<span class="t" style="left:83.50px;top:477.96px;font-size:9.5px;line-height:9.5px;color:#ffffff;font-weight:bold;transform:scaleX(1.0439);">Watercolor (Wet)</span>
<div class="a" style="left:43.4px;top:489.1px;width:130px;height:15.6px;background:#585858;"></div>
<div class="a" style="left:45.9px;top:491.8px;width:9.3px;height:9.1px;background:#f4e41c;"></div>
<span class="t" style="left:59.40px;top:493.48px;font-size:9px;line-height:9px;color:#f0f0f0;transform:scaleX(0.9385);">50</span>
<span class="t" style="left:83.50px;top:493.48px;font-size:9px;line-height:9px;color:#f0f0f0;transform:scaleX(0.9472);">Acrylic</span>
<div class="a" style="left:175.6px;top:445px;width:11.8px;height:61.4px;background:linear-gradient(90deg,#2a2a2a,#3e3e3e 50%,#2a2a2a);"></div>
<div class="a" style="left:175.9px;top:453px;width:11.200000000000001px;height:44px;background:linear-gradient(90deg,#606060,#787878 50%,#5e5e5e);border-radius:3.5px;"></div>
<svg class="a" style="left:178.5px;top:447px;" width="6" height="4.5" viewBox="0 0 6 4.5"><path d="M0 4.5L3 0 6 4.5z" fill="#b8b8b8"/></svg>
<svg class="a" style="left:178.5px;top:499.9px;" width="6" height="4.5" viewBox="0 0 6 4.5"><path d="M0 0L3 4.5 6 0z" fill="#b8b8b8"/></svg>
<div class="a" style="left:31.1px;top:510.3px;width:16.5px;height:16.5px;background:#474747;border-radius:3px;"></div>
<div class="a" style="left:51.5px;top:510.3px;width:16px;height:16.5px;background:#474747;border-radius:3px;"></div>
<div class="a" style="left:71.2px;top:510.3px;width:22.2px;height:16.5px;background:#474747;border-radius:3px;"></div>
<div class="a" style="left:97.1px;top:510.3px;width:16.5px;height:16.5px;background:#474747;border-radius:3px;"></div>
<div class="a" style="left:117.8px;top:510.3px;width:16.2px;height:16.5px;background:#474747;border-radius:3px;"></div>
<div class="a" style="left:137.7px;top:510.3px;width:16.5px;height:16.5px;background:#474747;border-radius:3px;"></div>
<div class="a" style="left:162.8px;top:510.3px;width:16.8px;height:16.5px;background:#474747;border-radius:3px;"></div>
<div class="a" style="left:158.4px;top:513px;width:1px;height:11px;background:#555;"></div>
<span class="t" style="left:894.75px;top:61.48px;font-size:9px;line-height:9px;color:#d6d6d6;transform:scaleX(0.8798);">Hoa tiêu</span>
<div class="a" style="left:818px;top:72px;width:206px;height:22.5px;background:#2a2a2a;"></div>
<div class="a" style="left:820.5px;top:75.3px;width:17.5px;height:16.7px;background:#474747;border-radius:3px;"></div>
<div class="a" style="left:846px;top:75.3px;width:17.3px;height:16.7px;background:#474747;border-radius:3px;"></div>
<div class="a" style="left:866.4px;top:75.3px;width:17.2px;height:16.7px;background:#474747;border-radius:3px;"></div>
<div class="a" style="left:887px;top:75.3px;width:16.7px;height:16.7px;background:#474747;border-radius:3px;"></div>
<div class="a" style="left:912px;top:75.3px;width:17.3px;height:16.7px;background:#474747;border-radius:3px;"></div>
<div class="a" style="left:932.8px;top:75.3px;width:16.9px;height:16.7px;background:#1e1e1e;border-radius:3px;border:1px solid #484848;"></div>
<div class="a" style="left:953px;top:75.3px;width:17px;height:16.7px;background:#474747;border-radius:3px;"></div>
<div class="a" style="left:978px;top:75.3px;width:17.4px;height:16.7px;background:#474747;border-radius:3px;"></div>
<div class="a" style="left:841.8px;top:78px;width:1px;height:11px;background:#555;"></div>
<div class="a" style="left:907.8px;top:78px;width:1px;height:11px;background:#555;"></div>
<div class="a" style="left:974px;top:78px;width:1px;height:11px;background:#555;"></div>
<div class="a" style="left:818px;top:94.5px;width:206px;height:128.5px;background:#4a4a4a;"></div>
<div class="a" style="left:858.7px;top:95px;width:125px;height:125.5px;background:#fff;"></div>
<span class="t" style="left:903.65px;top:228.78px;font-size:9px;line-height:9px;color:#d6d6d6;transform:scaleX(0.7725);">Lớp</span>
<span class="t" style="left:821.70px;top:246.88px;font-size:9px;line-height:9px;color:#dcdcdc;transform:scaleX(0.9412);">Độ trong</span>
<div class="a" style="left:874.3px;top:244.4px;width:117.7px;height:11.1px;background:#fff;"></div>
<div class="a" style="left:874.3px;top:244.4px;width:97.1px;height:11.1px;background:linear-gradient(90deg,#8cc8f5,#5aa6e0);"></div>
<span class="t" style="left:996.80px;top:246.88px;font-size:9px;line-height:9px;color:#dcdcdc;transform:scaleX(0.9359);">82 %</span>
<span class="t" style="left:821.70px;top:265.38px;font-size:9px;line-height:9px;color:#dcdcdc;transform:scaleX(0.9080);">Pha trộn</span>
<div class="a" style="left:875.5px;top:261.2px;width:144.2px;height:15.7px;background:#454545;border-radius:2px;"></div>
<span class="t" style="left:877.50px;top:265.38px;font-size:9px;line-height:9px;color:#d0d0d0;transform:scaleX(0.8619);">Bình thường</span>
<svg class="a" style="left:1011px;top:267.5px;" width="5" height="3.5" viewBox="0 0 5 3.5"><path d="M0 0H5L2.5 3.2z" fill="#aaa"/></svg>
<div class="a" style="left:824px;top:284.4px;width:8.9px;height:8.5px;background:#222;border:1px solid #c8c8c8;"></div>
<div class="a" style="left:892.6px;top:284.4px;width:8.9px;height:8.5px;background:#222;border:1px solid #c8c8c8;"></div>
<div class="a" style="left:959.8px;top:284.4px;width:8.9px;height:8.5px;background:#222;border:1px solid #c8c8c8;"></div>
<span class="t" style="left:836.30px;top:284.98px;font-size:9px;line-height:9px;color:#dcdcdc;transform:scaleX(0.8887);">Bảo vệ alpha</span>
<span class="t" style="left:904.80px;top:284.98px;font-size:9px;line-height:9px;color:#dcdcdc;transform:scaleX(0.8897);">Xén bớt</span>
<span class="t" style="left:972.40px;top:284.98px;font-size:9px;line-height:9px;color:#dcdcdc;transform:scaleX(0.8511);">Khóa</span>
<div class="a" style="left:820px;top:299.5px;width:188px;height:29.7px;background:#5a5a5a;"></div>
<div class="a" style="left:834px;top:299.5px;width:174px;height:29.7px;background:#4a9edc;"></div>
<div class="a" style="left:845.5px;top:300.8px;width:25.8px;height:25.8px;background-color:#fff;background-image:linear-gradient(45deg,#e4e4e4 25%,transparent 25%,transparent 75%,#e4e4e4 75%),linear-gradient(45deg,#e4e4e4 25%,transparent 25%,transparent 75%,#e4e4e4 75%);background-size:6px 6px;background-position:0 0,3px 3px;"></div>
<div class="a" style="left:823.1px;top:310.3px;width:7px;height:7px;background:radial-gradient(circle at 45% 40%,#e0e0e0,#b0b0b0);border-radius:50%;"></div>
<span class="t" style="left:883.60px;top:310.56px;font-size:9.5px;line-height:9.5px;color:#fff;font-weight:bold;transform:scaleX(0.9469);">Lớp4</span>
<div class="a" style="left:820px;top:329.4px;width:188px;height:29.8px;background:#5a5a5a;"></div>
<div class="a" style="left:845.5px;top:331px;width:25.8px;height:25.9px;background-color:#fff;background-image:linear-gradient(45deg,#e4e4e4 25%,transparent 25%,transparent 75%,#e4e4e4 75%),linear-gradient(45deg,#e4e4e4 25%,transparent 25%,transparent 75%,#e4e4e4 75%);background-size:6px 6px;background-position:0 0,3px 3px;"></div>
<div class="a" style="left:823.1px;top:340.8px;width:7px;height:7px;background:radial-gradient(circle at 45% 40%,#e0e0e0,#b0b0b0);border-radius:50%;"></div>
<span class="t" style="left:883.60px;top:340.36px;font-size:9.5px;line-height:9.5px;color:#f0f0f0;transform:scaleX(0.9098);">Lớp3</span>
<div class="a" style="left:820px;top:359.5px;width:188px;height:29.5px;background:#4c4c4c;"></div>
<div class="a" style="left:827px;top:359.5px;width:181px;height:29.5px;background:#5a5a5a;"></div>
<div class="a" style="left:820px;top:359.2px;width:188px;height:0.8px;background:#3e3e3e;"></div>
<div class="a" style="left:820px;top:329.2px;width:188px;height:0.6px;background:#3e3e3e;"></div>
<div class="a" style="left:853px;top:361px;width:25.6px;height:26px;background-color:#fff;background-image:linear-gradient(45deg,#e4e4e4 25%,transparent 25%,transparent 75%,#e4e4e4 75%),linear-gradient(45deg,#e4e4e4 25%,transparent 25%,transparent 75%,#e4e4e4 75%);background-size:6px 6px;background-position:0 0,3px 3px;"></div>
<div class="a" style="left:830.8px;top:370.7px;width:7px;height:7px;background:radial-gradient(circle at 45% 40%,#e0e0e0,#b0b0b0);border-radius:50%;"></div>
<span class="t" style="left:891.60px;top:370.76px;font-size:9.5px;line-height:9.5px;color:#f0f0f0;transform:scaleX(0.9007);">Lớp2</span>
<div class="a" style="left:1008.8px;top:299.5px;width:14px;height:89.5px;background:linear-gradient(90deg,#2a2a2a,#3e3e3e 50%,#2a2a2a);"></div>
<div class="a" style="left:1009.0999999999999px;top:307px;width:13.4px;height:54.5px;background:linear-gradient(90deg,#606060,#787878 50%,#5e5e5e);border-radius:3.5px;"></div>
<svg class="a" style="left:1012.8px;top:301.5px;" width="6" height="4.5" viewBox="0 0 6 4.5"><path d="M0 4.5L3 0 6 4.5z" fill="#b8b8b8"/></svg>
<svg class="a" style="left:1012.8px;top:382.5px;" width="6" height="4.5" viewBox="0 0 6 4.5"><path d="M0 0L3 4.5 6 0z" fill="#b8b8b8"/></svg>
<div class="a" style="left:822px;top:393px;width:17.4px;height:17px;background:#474747;border-radius:3px;"></div>
<div class="a" style="left:842.4px;top:393px;width:17.3px;height:17px;background:#474747;border-radius:3px;"></div>
<div class="a" style="left:862.7px;top:393px;width:17.3px;height:17px;background:#474747;border-radius:3px;"></div>
<div class="a" style="left:883px;top:393px;width:22.4px;height:17px;background:#474747;border-radius:3px;"></div>
<div class="a" style="left:908.4px;top:393px;width:17.6px;height:17px;background:#474747;border-radius:3px;"></div>
<div class="a" style="left:933.8px;top:393px;width:17.2px;height:17px;background:#474747;border-radius:3px;"></div>
<div class="a" style="left:954px;top:393px;width:17.8px;height:17px;background:#474747;border-radius:3px;"></div>
<div class="a" style="left:979.5px;top:393px;width:17.3px;height:17px;background:#474747;border-radius:3px;"></div>
<div class="a" style="left:929.3px;top:396px;width:1px;height:11px;background:#555;"></div>
<div class="a" style="left:975.5px;top:396px;width:1px;height:11px;background:#555;"></div>
<span class="t" style="left:891.55px;top:422.98px;font-size:9px;line-height:9px;color:#d6d6d6;transform:scaleX(0.8293);">Brush Size</span>
<div class="a" style="left:818px;top:434px;width:190px;height:97.5px;background:#5a5a5a;"></div>
<div class="a" style="left:847.1px;top:434px;width:1px;height:97.5px;background:#484848;"></div>
<div class="a" style="left:876.8px;top:434px;width:1px;height:97.5px;background:#484848;"></div>
<div class="a" style="left:907.0px;top:434px;width:1px;height:97.5px;background:#484848;"></div>
<div class="a" style="left:936.9px;top:434px;width:1px;height:97.5px;background:#484848;"></div>
<div class="a" style="left:966.5px;top:434px;width:1px;height:97.5px;background:#484848;"></div>
<div class="a" style="left:996.5px;top:434px;width:1px;height:97.5px;background:#484848;"></div>
<div class="a" style="left:997.5px;top:434px;width:12.5px;height:97.5px;background:#505050;"></div>
<div class="a" style="left:818px;top:471.0px;width:179px;height:1px;background:#484848;"></div>
<div class="a" style="left:818px;top:508.5px;width:179px;height:1px;background:#484848;"></div>
<svg class="a" style="left:818px;top:434px;overflow:hidden" width="190" height="97.5" viewBox="818 434 190 97.5"><circle cx="832.7" cy="449" r="0.35" fill="#f4f4f4"/><circle cx="862.6" cy="449" r="0.45" fill="#f4f4f4"/><circle cx="892.5" cy="449" r="0.65" fill="#f4f4f4"/><circle cx="922.6" cy="449" r="0.9" fill="#f4f4f4"/><circle cx="952.5" cy="449" r="1.3" fill="#f4f4f4"/><circle cx="982.7" cy="449" r="1.8" fill="#f4f4f4"/><circle cx="832.7" cy="486.4" r="2.5" fill="#f4f4f4"/><circle cx="862.6" cy="486.4" r="3.6" fill="#f4f4f4"/><circle cx="892.5" cy="486.4" r="4.4" fill="#f4f4f4"/><circle cx="922.6" cy="486.4" r="5.4" fill="#f4f4f4"/><circle cx="952.5" cy="486.4" r="7.5" fill="#f4f4f4"/><circle cx="982.7" cy="486.4" r="9" fill="#f4f4f4"/><circle cx="832.7" cy="523.8" r="9" fill="#f4f4f4"/><circle cx="862.6" cy="523.8" r="9" fill="#f4f4f4"/><circle cx="892.5" cy="523.8" r="9" fill="#f4f4f4"/><circle cx="922.6" cy="523.8" r="9" fill="#f4f4f4"/><circle cx="952.5" cy="523.8" r="9" fill="#f4f4f4"/><circle cx="982.7" cy="523.8" r="9" fill="#f4f4f4"/></svg>
<span class="t" style="left:830.61px;top:462.85px;font-size:7.5px;line-height:7.5px;color:#e8e8e8;">1</span>
<span class="t" style="left:857.38px;top:462.85px;font-size:7.5px;line-height:7.5px;color:#e8e8e8;">1.5</span>
<span class="t" style="left:890.41px;top:462.85px;font-size:7.5px;line-height:7.5px;color:#e8e8e8;">2</span>
<span class="t" style="left:920.51px;top:462.85px;font-size:7.5px;line-height:7.5px;color:#e8e8e8;">3</span>
<span class="t" style="left:950.41px;top:462.85px;font-size:7.5px;line-height:7.5px;color:#e8e8e8;">4</span>
<span class="t" style="left:980.61px;top:462.85px;font-size:7.5px;line-height:7.5px;color:#e8e8e8;">5</span>
<span class="t" style="left:830.61px;top:500.65px;font-size:7.5px;line-height:7.5px;color:#e8e8e8;">7</span>
<span class="t" style="left:858.43px;top:500.65px;font-size:7.5px;line-height:7.5px;color:#e8e8e8;">10</span>
<span class="t" style="left:888.33px;top:500.65px;font-size:7.5px;line-height:7.5px;color:#e8e8e8;">12</span>
<span class="t" style="left:918.43px;top:500.65px;font-size:7.5px;line-height:7.5px;color:#e8e8e8;">15</span>
<span class="t" style="left:948.33px;top:500.65px;font-size:7.5px;line-height:7.5px;color:#e8e8e8;">20</span>
<span class="t" style="left:978.53px;top:500.65px;font-size:7.5px;line-height:7.5px;color:#e8e8e8;">25</span>
<div class="a" style="left:1010px;top:434px;width:14px;height:97.5px;background:linear-gradient(90deg,#2a2a2a,#3e3e3e 50%,#2a2a2a);"></div>
<div class="a" style="left:1010.3px;top:443px;width:13.4px;height:50.60000000000002px;background:linear-gradient(90deg,#606060,#787878 50%,#5e5e5e);border-radius:3.5px;"></div>
<svg class="a" style="left:1014.0px;top:436px;" width="6" height="4.5" viewBox="0 0 6 4.5"><path d="M0 4.5L3 0 6 4.5z" fill="#b8b8b8"/></svg>
<svg class="a" style="left:1014.0px;top:525.0px;" width="6" height="4.5" viewBox="0 0 6 4.5"><path d="M0 0L3 4.5 6 0z" fill="#b8b8b8"/></svg>
<svg class="a" style="left:9.0px;top:35.2px" width="17" height="17" viewBox="0 0 17 17"><path d="M4.2 12.2a2.6 2.6 0 0 1-.3-5.2 3.6 3.6 0 0 1 6.9-1 2.9 2.9 0 0 1 2.6 2.9 2.7 2.7 0 0 1-2.4 3.3z" fill="#6fb0f2"/><path d="M6 8.7l1.8 1.8 3.2-3.4" fill="none" stroke="#fff" stroke-width="1.5" stroke-linecap="round" stroke-linejoin="round"/></svg>
<svg class="a" style="left:29.25px;top:35.2px" width="17" height="17" viewBox="0 0 17 17"><path d="M5.8 7.3H4.2V13.6H12.8V7.3H11.2" fill="none" stroke="#f2f2f2" stroke-width="1.2" stroke-linecap="round" stroke-linejoin="round" stroke-width="1.3"/><path d="M8.5 10.5V3.6M6.2 5.8L8.5 3.4 10.8 5.8" fill="none" stroke="#f2f2f2" stroke-width="1.2" stroke-linecap="round" stroke-linejoin="round" stroke-width="1.3"/></svg>
<svg class="a" style="left:49.5px;top:35.2px" width="17" height="17" viewBox="0 0 17 17"><ellipse cx="8.5" cy="7.6" rx="5.6" ry="4.1" fill="#f2f2f2"/><path d="M5.2 10.2L4.6 13.6 8.2 11z" fill="#f2f2f2"/><circle cx="8.5" cy="7.4" r="0.6" fill="#bbb"/></svg>
<svg class="a" style="left:69.75px;top:35.2px" width="17" height="17" viewBox="0 0 17 17"><path d="M3 4.2H14V11.3H9.6L8.2 13.2 7.4 11.3H3z" fill="#f2f2f2"/><path d="M4.8 6.6H12.2M4.8 8.9H9.2" stroke="#4a4a4a" stroke-width="1.1"/></svg>
<svg class="a" style="left:90.0px;top:35.2px" width="17" height="17" viewBox="0 0 17 17"><path d="M4.6 3.2H10L12.6 5.8V13.8H4.6z" fill="none" stroke="#f2f2f2" stroke-width="1.2" stroke-linecap="round" stroke-linejoin="round"/><path d="M9.8 3.3V6H12.5" fill="none" stroke="#f2f2f2" stroke-width="1.2" stroke-linecap="round" stroke-linejoin="round" stroke-width="0.9"/><path d="M5 8.6H12.2M5 11.2H12.2" stroke="#f2f2f2" stroke-width="1.4"/></svg>
<svg class="a" style="left:110.25px;top:35.2px" width="17" height="17" viewBox="0 0 17 17"><path d="M3.6 3.4H13.6V12H8M3.6 3.4V8M3.6 6.3H13.6M8.5 9.2H13.6M6 3.4V7" fill="none" stroke="#d8d8d8" stroke-width="1"/><circle cx="5.6" cy="11.2" r="2.7" fill="none" stroke="#d8d8d8" stroke-width="1"/><path d="M5.6 9.8V11.3H6.8" fill="none" stroke="#d8d8d8" stroke-width="0.8"/></svg>
<svg class="a" style="left:130.5px;top:35.2px" width="17" height="17" viewBox="0 0 17 17"><rect x="3.2" y="6" width="2.6" height="2.3" fill="#f2f2f2"/><rect x="3.2" y="9" width="2.6" height="2.3" fill="#f2f2f2"/><rect x="3.2" y="12" width="2.6" height="2.3" fill="#f2f2f2"/><rect x="6.5" y="6" width="2.6" height="2.3" fill="#f2f2f2"/><rect x="6.5" y="9" width="2.6" height="2.3" fill="#f2f2f2"/><rect x="6.5" y="12" width="2.6" height="2.3" fill="#f2f2f2"/><rect x="9.8" y="9" width="2.6" height="2.3" fill="#f2f2f2"/><rect x="9.8" y="12" width="2.6" height="2.3" fill="#f2f2f2"/><path d="M9.6 9.4L14 4.6" stroke="#f2f2f2" stroke-width="1.8" stroke-linecap="round"/><path d="M9 10.2L9.4 8.6 10.6 9.6z" fill="#f2f2f2"/><path d="M9.8 9.2L13.8 4.9" stroke="#4a4a4a" stroke-width="0.5"/></svg>
<svg class="a" style="left:169.4px;top:35.2px" width="24" height="17" viewBox="0 0 24 17"><path d="M5.2 8.3L11 3.6V6.3C15.5 6.3 18.6 8.6 19.3 12.6 17.4 10.4 14.6 9.9 11 10.2V13z" fill="#f2f2f2"/></svg>
<svg class="a" style="left:196.3px;top:35.2px" width="23" height="17" viewBox="0 0 23 17"><path d="M18.4 8.3L12.6 3.6V6.3C8.1 6.3 5 8.6 4.3 12.6 6.2 10.4 9 9.9 12.6 10.2V13z" fill="#f2f2f2"/></svg>
<svg class="a" style="left:231.0px;top:35.2px" width="17" height="17" viewBox="0 0 17 17"><circle cx="8.5" cy="8.5" r="5.6" fill="none" stroke="#a9d6fa" stroke-width="1.2"/><path d="M5.2 4.2L11.8 12.8" stroke="#a9d6fa" stroke-width="1.2"/></svg>
<svg class="a" style="left:251.3px;top:35.2px" width="17" height="17" viewBox="0 0 17 17"><path d="M3 6.4L14 3.8" stroke="#c8c8c8" stroke-width="0.9"/><path d="M3 8.3L14 5.699999999999999" stroke="#c8c8c8" stroke-width="0.9"/><path d="M3 10.2L14 7.6" stroke="#c8c8c8" stroke-width="0.9"/><path d="M3 12.1L14 9.5" stroke="#c8c8c8" stroke-width="0.9"/><path d="M3 14.0L14 11.399999999999999" stroke="#c8c8c8" stroke-width="0.9"/></svg>
<svg class="a" style="left:271.6px;top:35.2px" width="17" height="17" viewBox="0 0 17 17"><path d="M4.3 3.4V13.6" stroke="#f2f2f2" stroke-width="1"/><path d="M6.4 3.4V13.6" stroke="#f2f2f2" stroke-width="1"/><path d="M8.5 3.4V13.6" stroke="#f2f2f2" stroke-width="1"/><path d="M10.600000000000001 3.4V13.6" stroke="#f2f2f2" stroke-width="1"/><path d="M12.7 3.4V13.6" stroke="#f2f2f2" stroke-width="1"/><path d="M3.2 4.6H13.8" stroke="#c8c8c8" stroke-width="0.6"/><path d="M3.2 6.6H13.8" stroke="#c8c8c8" stroke-width="0.6"/><path d="M3.2 8.6H13.8" stroke="#c8c8c8" stroke-width="0.6"/><path d="M3.2 10.6H13.8" stroke="#c8c8c8" stroke-width="0.6"/><path d="M3.2 12.6H13.8" stroke="#c8c8c8" stroke-width="0.6"/></svg>
<svg class="a" style="left:291.9px;top:35.2px" width="17" height="17" viewBox="0 0 17 17"><path d="M3.6 8.5L13.4 3.4" stroke="#c8c8c8" stroke-width="0.9"/><path d="M3.6 8.5L13.4 5.949999999999999" stroke="#c8c8c8" stroke-width="0.9"/><path d="M3.6 8.5L13.4 8.5" stroke="#c8c8c8" stroke-width="0.9"/><path d="M3.6 8.5L13.4 11.049999999999999" stroke="#c8c8c8" stroke-width="0.9"/><path d="M3.6 8.5L13.4 13.6" stroke="#c8c8c8" stroke-width="0.9"/></svg>
<svg class="a" style="left:312.2px;top:35.2px" width="17" height="17" viewBox="0 0 17 17"><path d="M9.70 8.50L14.50 8.50" stroke="#f2f2f2" stroke-width="1.2"/><path d="M9.35 9.35L12.74 12.74" stroke="#f2f2f2" stroke-width="1.2"/><path d="M8.50 9.70L8.50 14.50" stroke="#f2f2f2" stroke-width="1.2"/><path d="M7.65 9.35L4.26 12.74" stroke="#f2f2f2" stroke-width="1.2"/><path d="M7.30 8.50L2.50 8.50" stroke="#f2f2f2" stroke-width="1.2"/><path d="M7.65 7.65L4.26 4.26" stroke="#f2f2f2" stroke-width="1.2"/><path d="M8.50 7.30L8.50 2.50" stroke="#f2f2f2" stroke-width="1.2"/><path d="M9.35 7.65L12.74 4.26" stroke="#f2f2f2" stroke-width="1.2"/></svg>
<svg class="a" style="left:332.5px;top:35.2px" width="17" height="17" viewBox="0 0 17 17"><circle cx="8.5" cy="8.5" r="1.4" fill="none" stroke="#c8c8c8" stroke-width="0.7"/><circle cx="8.5" cy="8.5" r="3.1" fill="none" stroke="#c8c8c8" stroke-width="0.7"/><circle cx="8.5" cy="8.5" r="4.8" fill="none" stroke="#c8c8c8" stroke-width="0.7"/><circle cx="8.5" cy="8.5" r="6.3" fill="none" stroke="#c8c8c8" stroke-width="0.7"/></svg>
<svg class="a" style="left:352.8px;top:35.2px" width="17" height="17" viewBox="0 0 17 17"><path d="M4 4.4C9 3.4 10.4 5.4 8.4 8.2 6.6 11 8.4 13.2 13 12.6" fill="none" stroke="#c8c8c8" stroke-width="1.1"/><rect x="3" y="3.4" width="2.2" height="2.2" fill="#f2f2f2"/><rect x="11.8" y="11.4" width="2.2" height="2.2" fill="#f2f2f2"/></svg>
<svg class="a" style="left:373.1px;top:35.2px" width="17" height="17" viewBox="0 0 17 17"><circle cx="8.5" cy="8.5" r="4.8" fill="none" stroke="#f2f2f2" stroke-width="1.2"/><circle cx="13.30" cy="8.50" r="1" fill="#f2f2f2"/><circle cx="11.89" cy="11.89" r="1" fill="#f2f2f2"/><circle cx="8.50" cy="13.30" r="1" fill="#f2f2f2"/><circle cx="5.11" cy="11.89" r="1" fill="#f2f2f2"/><circle cx="3.70" cy="8.50" r="1" fill="#f2f2f2"/><circle cx="5.11" cy="5.11" r="1" fill="#f2f2f2"/><circle cx="8.50" cy="3.70" r="1" fill="#f2f2f2"/><circle cx="11.89" cy="5.11" r="1" fill="#f2f2f2"/></svg>
<svg class="a" style="left:393.4px;top:35.2px" width="17" height="17" viewBox="0 0 17 17"><path d="M13.33 7.21L14.87 7.21L14.87 9.79L13.33 9.79L12.83 11.01L13.92 12.09L12.09 13.92L11.01 12.83L9.79 13.33L9.79 14.87L7.21 14.87L7.21 13.33L5.99 12.83L4.91 13.92L3.08 12.09L4.17 11.01L3.67 9.79L2.13 9.79L2.13 7.21L3.67 7.21L4.17 5.99L3.08 4.91L4.91 3.08L5.99 4.17L7.21 3.67L7.21 2.13L9.79 2.13L9.79 3.67L11.01 4.17L12.09 3.08L13.92 4.91L12.83 5.99ZM12.1 8.5A3.6 3.6 0 1 0 4.9 8.5A3.6 3.6 0 1 0 12.1 8.5Z" fill="#d8d8d8" fill-rule="evenodd"/><circle cx="8.5" cy="8.5" r="2.2" fill="none" stroke="#d8d8d8" stroke-width="0.9"/></svg>
<svg class="a" style="left:419px;top:39.5px" width="9.5" height="9" viewBox="0 0 9.5 9"><path d="M3 2.8L6.5 6.2M6.5 2.8L3 6.2" stroke="#f2f2f2" stroke-width="1.3"/></svg>
<svg class="a" style="left:696.5px;top:37.5px" width="12" height="12" viewBox="0 0 12 12"><circle cx="6" cy="6" r="5" fill="none" stroke="#f2f2f2" stroke-width="1.1"/><path d="M2.6 2.6L9.4 9.4" stroke="#f2f2f2" stroke-width="1.1"/></svg>
<svg class="a" style="left:748px;top:38px" width="11" height="12" viewBox="0 0 11 12"><path d="M1.5 10.2L9.4 1.6" stroke="#f2f2f2" stroke-width="1.5" stroke-linecap="round"/></svg>
<svg class="a" style="left:3px;top:64.3px" width="20.3" height="20.5" viewBox="0 0 20.3 20.5"><path d="M9 11L16.6 3.6" stroke="#fff" stroke-width="2.2" stroke-linecap="round"/><path d="M8.8 9.8C6.8 9.6 5.6 11 5.4 12.8 5.2 14 4.4 14.8 3.4 15.2 5.8 16.6 9.6 15.6 10.4 12.8 10.7 11.8 10 10.4 8.8 9.8z" fill="#fff"/></svg>
<svg class="a" style="left:3px;top:87.7px" width="20.3" height="20.5" viewBox="0 0 20.3 20.5"><path d="M3.8 11.2L10.6 4.6 16.8 8.6 9.6 15.8z" fill="none" stroke="#f2f2f2" stroke-width="1.2" stroke-linejoin="round"/><path d="M3.8 11.2L7.2 8 13.2 12.2 9.6 15.8z" fill="#f2f2f2"/></svg>
<svg class="a" style="left:3px;top:110.9px" width="20.3" height="20.5" viewBox="0 0 20.3 20.5"><rect x="5.2" y="5.4" width="9.8" height="9.8" fill="none" stroke="#f2f2f2" stroke-width="1.2"/></svg>
<svg class="a" style="left:3px;top:134.2px" width="20.3" height="20.5" viewBox="0 0 20.3 20.5"><path d="M10 11.6L16.2 5" stroke="#f2f2f2" stroke-width="2.3" stroke-linecap="round"/><rect x="3.2" y="9.6" width="2.2" height="2.2" fill="#f2f2f2"/><rect x="5.4" y="11.8" width="2.2" height="2.2" fill="#f2f2f2"/><rect x="7.6" y="14" width="2.2" height="2.2" fill="#f2f2f2"/></svg>
<svg class="a" style="left:3px;top:162.3px" width="20.3" height="20.5" viewBox="0 0 20.3 20.5"><path d="M10.1 3.4V17M3.4 10.2H17" stroke="#f2f2f2" stroke-width="1.3"/><path d="M10.1 2.4L12.4 5.2H7.8zM10.1 18L12.4 15.2H7.8zM2.4 10.2L5.2 7.9V12.5zM17.9 10.2L15.1 7.9V12.5z" fill="#f2f2f2"/></svg>
<svg class="a" style="left:3px;top:190.2px" width="20.3" height="20.5" viewBox="0 0 20.3 20.5"><rect x="5" y="5.2" width="10.4" height="10.4" fill="#e8e8e8"/></svg>
<svg class="a" style="left:3px;top:213.4px" width="20.3" height="20.5" viewBox="0 0 20.3 20.5"><path d="M4.4 9.6L10 5.4 15.2 11.4 9 16.4z" fill="#f2f2f2"/><path d="M4.8 9.4C4.6 6 6.2 3.6 8 3.8 9.4 4 9.8 6 9.6 7.6" fill="none" stroke="#f2f2f2" stroke-width="1.1"/><path d="M15.4 11.6C16.4 13.2 17 14.6 16.2 15.6 15.4 16.2 14.6 15.4 14.8 14.2z" fill="#f2f2f2"/><path d="M5.8 10L10 6.8" stroke="#4a4a4a" stroke-width="0.8"/></svg>
<svg class="a" style="left:3px;top:236.6px" width="20.3" height="20.5" viewBox="0 0 20.3 20.5"><defs><linearGradient id="gg" x1="0" y1="0" x2="1" y2="1"><stop offset="0" stop-color="#f4f4f4"/><stop offset="1" stop-color="#555"/></linearGradient></defs><rect x="4" y="5.2" width="12.4" height="10.4" fill="url(#gg)" stroke="#cfcfcf" stroke-width="0.9"/></svg>
<svg class="a" style="left:3px;top:265px" width="20.3" height="20.5" viewBox="0 0 20.3 20.5"><rect x="5" y="5" width="10.4" height="10.4" fill="none" stroke="#d8d8d8" stroke-width="1.2" stroke-dasharray="1.7 1.3"/></svg>
<svg class="a" style="left:3px;top:288.2px" width="20.3" height="20.5" viewBox="0 0 20.3 20.5"><path d="M4.4 12.6C3.6 9.6 6.4 7.2 9.2 6 12.4 4.6 15.8 4.8 16.4 7.4 17 10 14.2 12 11.4 14 8.6 16 5.2 15.6 4.4 12.6z" fill="none" stroke="#d8d8d8" stroke-width="1.2" stroke-dasharray="1.7 1.3"/></svg>
<svg class="a" style="left:3px;top:313.3px" width="20.3" height="20.5" viewBox="0 0 20.3 20.5"><path d="M4.6 16L11.2 9.2" stroke="#f2f2f2" stroke-width="2.1" stroke-linecap="round"/><path d="M13 3.6V6.2M13 8.6V11.2M9.4 7.4H11.6M14.4 7.4H16.8M10.6 5L11.8 6.2M15.4 5L14.2 6.2M15.4 9.8L14.2 8.6" stroke="#f2f2f2" stroke-width="1"/></svg>
<svg class="a" style="left:3px;top:336.8px" width="20.3" height="20.5" viewBox="0 0 20.3 20.5"><path d="M5 6H11M5 6V15.4H14.4V10.4" fill="none" stroke="#d8d8d8" stroke-width="1.2" stroke-dasharray="1.7 1.3"/><path d="M9.2 11.6L15.6 4.8" stroke="#f2f2f2" stroke-width="2" stroke-linecap="round"/><path d="M8 13L8.6 11 10 12.2z" fill="#f2f2f2"/></svg>
<svg class="a" style="left:3px;top:360.3px" width="20.3" height="20.5" viewBox="0 0 20.3 20.5"><path d="M5 7H8M5 7V15.6H10" fill="none" stroke="#d8d8d8" stroke-width="1.2" stroke-dasharray="1.7 1.3"/><path d="M8.4 11L13 6.2 16.8 8.8 12 13.8z" fill="#f2f2f2" stroke="#f2f2f2" stroke-width="0.8" stroke-linejoin="round"/><path d="M10.6 8.8L14.4 11.4" stroke="#4a4a4a" stroke-width="0.9"/></svg>
<span class="t" style="left:5.6px;top:389.9px;font-family:'Liberation Serif',serif;font-weight:bold;font-size:19px;line-height:19px;color:#f4f4f4;transform:scaleX(1.08)">T</span>
<svg class="a" style="left:3px;top:412px" width="20.3" height="20.5" viewBox="0 0 20.3 20.5"><path d="M4 8.4L6.4 5 10.4 4.6 12 7.4 10.6 10 6.6 11z" fill="none" stroke="#f2f2f2" stroke-width="1.2" stroke-linejoin="round"/><path d="M10.2 9.2L16.6 13.4 13.4 13.9 12 17z" fill="#f2f2f2"/></svg>
<svg class="a" style="left:3px;top:435.2px" width="20.3" height="20.5" viewBox="0 0 20.3 20.5"><path d="M5.2 15.6L4.6 12.2 12.8 4.4C14 3.4 16.4 5.4 15.4 6.8L8.6 15z" fill="#f2f2f2"/><path d="M6 12.6L9 15" stroke="#4a4a4a" stroke-width="0.9"/></svg>
<svg class="a" style="left:3px;top:462.8px" width="20.3" height="20.5" viewBox="0 0 20.3 20.5"><path d="M4.6 16.2L5.2 13.4 11.4 7.2 13.4 9.2 7.2 15.4z" fill="none" stroke="#f2f2f2" stroke-width="1.2" stroke-linejoin="round"/><path d="M10.6 6.4L14.2 10" stroke="#f2f2f2" stroke-width="1.8" stroke-linecap="round"/><path d="M12.8 7.6L15 5.4" stroke="#f2f2f2" stroke-width="3" stroke-linecap="round"/></svg>
<svg class="a" style="left:3px;top:486.5px" width="20.3" height="20.5" viewBox="0 0 20.3 20.5"><path d="M8.2 13.4L4.4 9.6M8.8 11L7.6 4.8M10.5 10.6V3.4M12.2 11L13.5 4.4M13.8 12L16 6.8" stroke="#f2f2f2" stroke-width="2" stroke-linecap="round"/><path d="M7.2 10.6H14.8L14.2 15.4Q13.8 17.2 12.4 17.2H9.6Q8.4 17.2 7.6 15.6z" fill="#f2f2f2"/></svg>
<svg class="a" style="left:820.5px;top:75.3px" width="17" height="17" viewBox="0 0 17 17"><circle cx="7.4" cy="7.2" r="3.7" fill="none" stroke="#f2f2f2" stroke-width="1.3"/><path d="M10.2 10L13.4 13.2" stroke="#f2f2f2" stroke-width="1.8" stroke-linecap="round"/><path d="M7.5 5.2V9.2M6.6 5.9L7.5 5.2" stroke="#f2f2f2" stroke-width="1" fill="none"/></svg>
<svg class="a" style="left:846px;top:75.3px" width="17" height="17" viewBox="0 0 17 17"><circle cx="7.4" cy="7.2" r="3.7" fill="none" stroke="#f2f2f2" stroke-width="1.3"/><path d="M10.2 10L13.4 13.2" stroke="#f2f2f2" stroke-width="1.8" stroke-linecap="round"/><path d="M5.4 7.2H9.4M7.4 5.2V9.2" stroke="#f2f2f2" stroke-width="1.2"/></svg>
<svg class="a" style="left:866.4px;top:75.3px" width="17" height="17" viewBox="0 0 17 17"><rect x="3.4" y="3.8" width="10.4" height="9.4" fill="none" stroke="#f2f2f2" stroke-width="1.2"/><path d="M4.6 5L7 7.2M12.6 5L10.2 7.2M4.6 12L7 9.8M12.6 12L10.2 9.8" stroke="#f2f2f2" stroke-width="1.1"/><path d="M7.4 7.6L5.6 7.4 7.2 5.8zM9.8 7.6L11.6 7.4 10 5.8zM7.4 9.4L5.6 9.6 7.2 11.2zM9.8 9.4L11.6 9.6 10 11.2z" fill="#f2f2f2"/></svg>
<svg class="a" style="left:887px;top:75.3px" width="17" height="17" viewBox="0 0 17 17"><circle cx="7.4" cy="7.2" r="3.7" fill="none" stroke="#f2f2f2" stroke-width="1.3"/><path d="M10.2 10L13.4 13.2" stroke="#f2f2f2" stroke-width="1.8" stroke-linecap="round"/><path d="M5.4 7.2H9.4" stroke="#f2f2f2" stroke-width="1.2"/></svg>
<svg class="a" style="left:912px;top:75.3px" width="17" height="17" viewBox="0 0 17 17"><path d="M12.6 4.6A5.4 5.4 0 1 1 5 4.2" fill="none" stroke="#f2f2f2" stroke-width="1.5"/><path d="M3.4 2.6L7.2 3.2 4.6 6.2z" fill="#f2f2f2"/><path d="M6 8.2L9.8 6 11.8 9.2 8 11.2z" fill="#f2f2f2"/></svg>
<svg class="a" style="left:932.8px;top:75.3px" width="17" height="17" viewBox="0 0 17 17"><rect x="5" y="5" width="7" height="6.6" fill="#f2f2f2"/><path d="M3 3.2L5.4 5.4M14 3.2L11.6 5.4M3 13.4L5.4 11.2M14 13.4L11.6 11.2" stroke="#f2f2f2" stroke-width="1.3"/><path d="M2.6 2.8H5M2.6 2.8V5M14.4 2.8H12M14.4 2.8V5M2.6 13.8H5M2.6 13.8V11.6M14.4 13.8H12M14.4 13.8V11.6" stroke="#f2f2f2" stroke-width="1" fill="none"/></svg>
<svg class="a" style="left:953px;top:75.3px" width="17" height="17" viewBox="0 0 17 17"><path d="M4.4 4.6A5.4 5.4 0 1 0 12 4.2" fill="none" stroke="#f2f2f2" stroke-width="1.5"/><path d="M13.6 2.6L9.8 3.2 12.4 6.2z" fill="#f2f2f2"/><path d="M11 8.2L7.2 6 5.2 9.2 9 11.2z" fill="#f2f2f2"/></svg>
<svg class="a" style="left:978px;top:75.3px" width="17" height="17" viewBox="0 0 17 17"><rect x="3.2" y="6.6" width="4.2" height="6.8" fill="#f2f2f2"/><rect x="10" y="6.6" width="4" height="6.8" fill="none" stroke="#f2f2f2" stroke-width="1.1"/><path d="M5.4 5.4C6.4 2.6 10.8 2.6 12 5.4" fill="none" stroke="#f2f2f2" stroke-width="1.1"/></svg>
<svg class="a" style="left:822px;top:393px" width="17" height="17" viewBox="0 0 17 17"><path d="M4.4 3H10L12.8 5.8V14H4.4z" fill="none" stroke="#f2f2f2" stroke-width="1.2" stroke-linejoin="round"/><path d="M9.8 3.2V6H12.6" fill="none" stroke="#f2f2f2" stroke-width="0.9"/></svg>
<svg class="a" style="left:842.4px;top:393px" width="17" height="17" viewBox="0 0 17 17"><path d="M4.4 3H10L12.8 5.8V14H4.4z" fill="none" stroke="#f2f2f2" stroke-width="1.2" stroke-linejoin="round"/><path d="M9.8 3.2V6H12.6" fill="none" stroke="#f2f2f2" stroke-width="0.9"/><rect x="6.4" y="8" width="4" height="4.6" fill="none" stroke="#f2f2f2" stroke-width="0.9"/><path d="M7.4 10.3H9.4" stroke="#f2f2f2" stroke-width="0.8"/></svg>
<svg class="a" style="left:862.7px;top:393px" width="17" height="17" viewBox="0 0 17 17"><path d="M4.4 3H10L12.8 5.8V14H4.4z" fill="none" stroke="#f2f2f2" stroke-width="1.2" stroke-linejoin="round"/><path d="M9.8 3.2V6H12.6" fill="none" stroke="#f2f2f2" stroke-width="0.9"/><path d="M8.8 8V12.8M7.6 9L8.8 8" stroke="#f2f2f2" stroke-width="1.1" fill="none"/></svg>
<svg class="a" style="left:883px;top:393px" width="22.4" height="17" viewBox="0 0 22.4 17"><path d="M4 3H8.4L10.6 5.2V8.4M4 3V12.6H7.6" fill="none" stroke="#cfcfcf" stroke-width="1.1"/><path d="M7.4 11.8H12.6M10 9.2V14.4" stroke="#f2f2f2" stroke-width="1.4"/><path d="M14.6 7.4H20L17.3 10.6z" fill="#f2f2f2"/></svg>
<svg class="a" style="left:908.4px;top:393px" width="17.6" height="17" viewBox="0 0 17.6 17"><path d="M3.4 4.4H7.6L8.8 5.8H14.2V13H3.4z" fill="#f2f2f2"/></svg>
<svg class="a" style="left:933.8px;top:393px" width="17" height="17" viewBox="0 0 17 17"><rect x="6.2" y="3.6" width="7.4" height="7.4" fill="none" stroke="#cfcfcf" stroke-width="1.1"/><rect x="3.6" y="6.2" width="7.4" height="7.4" fill="#474747" stroke="#cfcfcf" stroke-width="1.1"/></svg>
<svg class="a" style="left:954px;top:393px" width="17.8" height="17" viewBox="0 0 17.8 17"><rect x="3.4" y="3.8" width="3.4" height="3.6" fill="#f2f2f2"/><rect x="3.4" y="9.4" width="3.4" height="3.8" fill="#f2f2f2"/><path d="M4.4 5.6H5.8M4.4 11H5.8" stroke="#555" stroke-width="0.8"/><rect x="10" y="5.6" width="4.6" height="4.6" fill="#f2f2f2"/><path d="M7 8H10" stroke="#f2f2f2" stroke-width="1"/></svg>
<svg class="a" style="left:979.5px;top:393px" width="17" height="17" viewBox="0 0 17 17"><path d="M4.6 6.2H12.6V14H4.6z" fill="none" stroke="#f2f2f2" stroke-width="1.3"/><path d="M7.2 6.4V13.8M10 6.4V13.8" stroke="#f2f2f2" stroke-width="1.2"/><path d="M3.8 5.2H13.4" stroke="#f2f2f2" stroke-width="1.6"/><path d="M7 4.2V3.2H10.2V4.2" fill="none" stroke="#f2f2f2" stroke-width="1.1"/></svg>
<svg class="a" style="left:31.1px;top:510.1px" width="17" height="17" viewBox="0 0 17 17"><path d="M4.6 9.8a2.4 2.4 0 0 1-.2-4.6 3.4 3.4 0 0 1 6.4-.9 2.7 2.7 0 0 1 2.2 2.8 2.5 2.5 0 0 1-2.2 2.8z" fill="#f2f2f2"/><path d="M8.4 7V14.2M6 11.8L8.4 14.4 10.8 11.8" fill="none" stroke="#f2f2f2" stroke-width="1.5"/><path d="M8.4 7V10" stroke="#474747" stroke-width="2.6"/><path d="M8.4 6.6V14" stroke="#f2f2f2" stroke-width="1.5"/></svg>
<svg class="a" style="left:51.5px;top:510.1px" width="17" height="17" viewBox="0 0 17 17"><path d="M4 3H10L12.8 5.8V14H4z" fill="none" stroke="#f2f2f2" stroke-width="1.2" stroke-linejoin="round"/><path d="M9.8 3.2V6H12.6" fill="none" stroke="#f2f2f2" stroke-width="0.9"/></svg>
<svg class="a" style="left:71.2px;top:510.1px" width="22.2" height="17" viewBox="0 0 22.2 17"><path d="M4 3H8.8L11.2 5.4V13.6H4z" fill="none" stroke="#cfcfcf" stroke-width="1.1"/><rect x="5.6" y="7.2" width="2.2" height="2.2" fill="#f2f2f2"/><rect x="7.8" y="9.4" width="2.2" height="2.2" fill="#f2f2f2"/><rect x="5.6" y="11.2" width="2" height="1.6" fill="#aaa"/><path d="M14.4 7.4H19.6L17 10.4z" fill="#f2f2f2"/></svg>
<svg class="a" style="left:97.1px;top:510.1px" width="17" height="17" viewBox="0 0 17 17"><path d="M4 3H10L12.8 5.8V14H4z" fill="none" stroke="#f2f2f2" stroke-width="1.2" stroke-linejoin="round"/><path d="M9.8 3.2V6H12.6" fill="none" stroke="#f2f2f2" stroke-width="0.9"/><rect x="5.8" y="8" width="4.4" height="4.4" fill="none" stroke="#f2f2f2" stroke-width="0.9"/><path d="M7 10.2H9" stroke="#f2f2f2" stroke-width="0.8"/></svg>
<svg class="a" style="left:117.8px;top:510.1px" width="17" height="17" viewBox="0 0 17 17"><path d="M3 4.4H7.2L8.4 5.8H13.6V13H3z" fill="#f2f2f2"/></svg>
<svg class="a" style="left:137.7px;top:510.1px" width="17" height="17" viewBox="0 0 17 17"><rect x="6" y="3.6" width="7.4" height="7.4" fill="none" stroke="#cfcfcf" stroke-width="1.1"/><rect x="3.4" y="6.2" width="7.4" height="7.4" fill="#474747" stroke="#cfcfcf" stroke-width="1.1"/></svg>
<svg class="a" style="left:162.8px;top:510.1px" width="17" height="17" viewBox="0 0 17 17"><path d="M4.6 6.2H12.6V14H4.6z" fill="none" stroke="#f2f2f2" stroke-width="1.3"/><path d="M7.2 6.4V13.8M10 6.4V13.8" stroke="#f2f2f2" stroke-width="1.2"/><path d="M3.8 5.2H13.4" stroke="#f2f2f2" stroke-width="1.6"/><path d="M7 4.2V3.2H10.2V4.2" fill="none" stroke="#f2f2f2" stroke-width="1.1"/></svg>
<svg class="a" style="left:162.5px;top:477.3px" width="8.4" height="8.4" viewBox="0 0 8.4 8.4"><path d="M7.10 3.43L8.51 3.33L8.51 5.07L7.10 4.97L6.80 5.70L7.87 6.63L6.63 7.87L5.70 6.80L4.97 7.10L5.07 8.51L3.33 8.51L3.43 7.10L2.70 6.80L1.77 7.87L0.53 6.63L1.60 5.70L1.30 4.97L-0.11 5.07L-0.11 3.33L1.30 3.43L1.60 2.70L0.53 1.77L1.77 0.53L2.70 1.60L3.43 1.30L3.33 -0.11L5.07 -0.11L4.97 1.30L5.70 1.60L6.63 0.53L7.87 1.77L6.80 2.70ZM5.5 4.2A1.3 1.3 0 1 0 2.9000000000000004 4.2A1.3 1.3 0 1 0 5.5 4.2Z" fill="#fff" fill-rule="evenodd"/></svg>
<svg class="a" style="left:991.5px;top:307.8px" width="14" height="14" viewBox="0 0 14 14"><path d="M11.74 5.74L13.86 5.61L13.86 8.39L11.74 8.26L11.24 9.46L12.83 10.87L10.87 12.83L9.46 11.24L8.26 11.74L8.39 13.86L5.61 13.86L5.74 11.74L4.54 11.24L3.13 12.83L1.17 10.87L2.76 9.46L2.26 8.26L0.14 8.39L0.14 5.61L2.26 5.74L2.76 4.54L1.17 3.13L3.13 1.17L4.54 2.76L5.74 2.26L5.61 0.14L8.39 0.14L8.26 2.26L9.46 2.76L10.87 1.17L12.83 3.13L11.24 4.54ZM9.2 7A2.2 2.2 0 1 0 4.8 7A2.2 2.2 0 1 0 9.2 7Z" fill="#fff" fill-rule="evenodd"/></svg>
<svg class="a" style="left:33.8px;top:178.8px" width="16.7" height="16.6" viewBox="0 0 16.7 16.6"><path d="M11.06 11.90A5.2 5.2 0 1 1 13.40 8.78C10.28 8.52 9.24 10.60 11.06 11.90z" fill="#f2f2f2"/><circle cx="5.27" cy="6.93" r="0.88" fill="#474747"/><circle cx="7.13" cy="5.07" r="0.88" fill="#474747"/><circle cx="9.76" cy="5.30" r="0.88" fill="#474747"/><circle cx="5.50" cy="9.56" r="0.88" fill="#474747"/></svg>
<svg class="a" style="left:54px;top:178.8px" width="17" height="16.6" viewBox="0 0 17 16.6"><path d="M8.96 9.78A4.1 4.1 0 1 1 10.80 7.32C8.34 7.11 7.52 8.75 8.96 9.78z" fill="#e4e8ec"/><circle cx="4.39" cy="5.86" r="0.70" fill="#2c3640"/><circle cx="5.86" cy="4.39" r="0.70" fill="#2c3640"/><circle cx="7.93" cy="4.57" r="0.70" fill="#2c3640"/><circle cx="4.57" cy="7.93" r="0.70" fill="#2c3640"/><rect x="7" y="10.3" width="6.6" height="2.7" fill="#ece8da" stroke="#2c3640" stroke-width="0.5"/><path d="M8 11.6H12.6" stroke="#8a8676" stroke-width="0.7"/></svg>
<svg class="a" style="left:0;top:0" width="1024" height="548" viewBox="0 0 1024 548"><path d="M847.6 313.6L850.8 312.6M865.2 312.7L868.2 313.9" stroke="#2a1030" stroke-width="1.1" stroke-linecap="round"/><path d="M852 311.8L853.4 311.5M860.8 311.5L862.2 311.8" stroke="#8a84a8" stroke-width="0.8"/><ellipse cx="851.9" cy="344.6" rx="2.7" ry="2.7" fill="#12068c"/><ellipse cx="862.6" cy="344.6" rx="2.6" ry="2.4" fill="#12068c"/><path d="M847.6 350.6H855" stroke="#12068c" stroke-width="1.6" stroke-dasharray="1.5 0.5"/><ellipse cx="860.3" cy="375.5" rx="3.2" ry="2.9" fill="#12068c"/><ellipse cx="869.7" cy="375.5" rx="3.8" ry="2.9" fill="#12068c"/></svg>
<svg class="a" style="left:0;top:0" width="1024" height="548" viewBox="0 0 1024 548"><defs><filter id="b2" x="-30%" y="-30%" width="160%" height="160%"><feGaussianBlur stdDeviation="2.2"/></filter><filter id="b4" x="-30%" y="-30%" width="160%" height="160%"><feGaussianBlur stdDeviation="4"/></filter><filter id="b1" x="-30%" y="-30%" width="160%" height="160%"><feGaussianBlur stdDeviation="1.1"/></filter><linearGradient id="gI" gradientUnits="userSpaceOnUse" x1="0" y1="204" x2="0" y2="323"><stop offset="0" stop-color="#0c006e"/><stop offset="0.14" stop-color="#0e0080"/><stop offset="0.3" stop-color="#10008e"/><stop offset="0.6" stop-color="#120098"/><stop offset="0.8" stop-color="#1402a6"/><stop offset="1" stop-color="#1804b0"/></linearGradient><linearGradient id="gL" gradientUnits="userSpaceOnUse" x1="258" y1="262" x2="322" y2="212"><stop offset="0" stop-color="#241498"/><stop offset="0.25" stop-color="#2d1c92"/><stop offset="0.5" stop-color="#2e1a78"/><stop offset="0.72" stop-color="#2e1266" stop-opacity="0.9"/><stop offset="1" stop-color="#2b0a30" stop-opacity="0"/></linearGradient><linearGradient id="gR2" gradientUnits="userSpaceOnUse" x1="550" y1="205" x2="604" y2="195"><stop offset="0" stop-color="#26169a"/><stop offset="0.5" stop-color="#2c1a8c"/><stop offset="0.8" stop-color="#2e1670" stop-opacity="0.9"/><stop offset="1" stop-color="#2b0a30" stop-opacity="0"/></linearGradient><linearGradient id="gR" gradientUnits="userSpaceOnUse" x1="742" y1="258" x2="676" y2="214"><stop offset="0" stop-color="#26169a"/><stop offset="0.3" stop-color="#2e1c98"/><stop offset="0.5" stop-color="#2e1a7a"/><stop offset="0.75" stop-color="#2c1262" stop-opacity="0.9"/><stop offset="1" stop-color="#2b0a30" stop-opacity="0"/></linearGradient><clipPath id="cLu"><path d="M247.3 228.9L258.2 226.5L271.0 225.6L282.0 218.3L294.7 209.2L305.7 202.8L322.1 197.3L340.0 191.0L352.0 188.8L361.3 187.7L371.7 187.0L385.5 175.6L394.9 169.7L396.6 173.9L395.9 184.3L409.8 189.5L423.6 196.4L434.0 203.3L439.2 211.3L434.0 211.3L423.6 206.8L413.3 204.4L402.9 203.3L378.6 212.0L347.4 215.4L329.4 225.6L322.1 228.4L313.0 232.9L303.9 238.4L294.7 245.7L285.6 254.8L276.5 265.8L270.1 272.2L264.6 275.3L261.9 271.2L261.0 262.0L259.2 252.0L254.6 243.9L250.0 234.7Z"/></clipPath><clipPath id="cRu"><path d="M542.3 211.8L543.8 207.4L549.6 201.6L556.9 196.5L567.1 191.4L578.8 188.5L587.6 187.0L588.7 171.7L591.2 172.0L600.7 179.0L613.8 187.0L636.5 188.8L651.1 192.4L665.7 197.5L680.3 204.1L696.2 214.1L708.2 223.2L716.3 228.2L726.3 226.6L736.3 226.6L746.4 229.2L749.0 231.8L746.4 238.2L741.4 246.3L735.3 254.3L736.3 262.3L734.3 270.4L731.3 276.4L726.3 274.4L718.3 266.3L708.2 256.3L700.0 248.6L687.6 241.3L677.4 235.5L665.7 229.6L658.4 225.3L648.2 220.1L635.0 215.0L623.4 211.5L613.8 207.6L602.2 205.3L593.4 206.0L583.2 206.7L573.0 207.4L564.2 206.7L555.4 207.4L549.6 210.4L545.2 213.3Z"/></clipPath><clipPath id="cLi"><path d="M321.5 266.5C321.0 261.9 322.1 258.0 322.8 253.8C323.5 249.5 324.4 245.0 325.8 241.0C327.3 236.9 329.2 233.1 331.7 229.5C334.2 225.9 337.3 222.3 340.7 219.3C344.1 216.3 347.9 213.7 352.2 211.6C356.4 209.5 361.3 207.8 366.2 206.5C371.1 205.2 376.4 204.4 381.5 203.9C386.6 203.5 392.2 203.5 396.9 203.9C401.6 204.4 405.8 205.0 409.6 206.5C413.5 208.0 417.1 210.1 419.9 212.9C422.6 215.7 424.3 219.3 426.2 223.1C428.2 226.9 430.0 231.2 431.4 235.9C432.7 240.6 433.8 246.1 434.4 251.2C435.1 256.3 435.3 261.9 435.2 266.5C435.1 271.2 434.8 274.8 433.9 279.3C433.1 283.8 431.8 289.1 430.1 293.4C428.4 297.6 426.2 301.5 423.7 304.9C421.1 308.3 418.2 311.3 414.8 313.8C411.3 316.3 407.1 318.3 403.3 319.7C399.4 321.0 395.8 321.6 391.8 322.0C387.7 322.4 383.2 322.4 379.0 322.0C374.7 321.6 370.5 321.0 366.2 319.7C362.0 318.3 357.5 316.3 353.4 313.8C349.4 311.3 345.3 308.1 341.9 304.9C338.5 301.7 335.7 298.5 333.0 294.6C330.3 290.8 327.8 286.6 325.8 281.9C323.9 277.2 322.0 271.2 321.5 266.5Z"/></clipPath><clipPath id="cRi"><path d="M546.7 267.8C546.2 264.8 546.3 261.9 546.5 258.8C546.7 255.7 547.0 252.5 547.8 249.1C548.5 245.7 549.3 242.3 550.8 238.4C552.3 234.5 554.4 229.5 556.7 225.6C559.0 221.8 561.6 218.4 564.4 215.4C567.1 212.4 569.7 209.6 573.3 207.8C576.9 206.0 581.4 205.3 586.1 204.7C590.7 204.1 595.8 203.9 601.4 203.9C606.9 204.0 613.7 204.1 619.2 205.2C624.8 206.3 629.9 208.0 634.6 210.3C639.2 212.7 643.5 215.8 647.3 219.3C651.2 222.7 654.8 226.7 657.5 230.7C660.3 234.8 662.2 238.8 663.9 243.5C665.6 248.2 667.0 254.1 667.8 258.8C668.5 263.5 668.5 267.3 668.3 271.6C668.1 275.8 667.6 280.1 666.5 284.4C665.3 288.6 663.5 293.3 661.4 297.1C659.2 300.9 656.9 304.4 653.7 307.3C650.5 310.3 646.3 312.9 642.2 315.0C638.2 317.1 634.1 318.9 629.5 320.1C624.8 321.2 619.2 321.8 614.1 321.9C609.0 322.0 603.7 321.7 598.8 320.6C593.9 319.5 589.3 317.7 584.8 315.5C580.3 313.3 575.8 310.4 572.0 307.3C568.2 304.3 564.7 300.7 561.8 297.1C558.9 293.5 556.4 289.0 554.4 285.6C552.4 282.2 550.8 279.7 549.6 276.7C548.3 273.7 547.3 270.7 546.7 267.8Z"/></clipPath></defs><g id="artg"><path d="M247.3 228.9L258.2 226.5L271.0 225.6L282.0 218.3L294.7 209.2L305.7 202.8L322.1 197.3L340.0 191.0L352.0 188.8L361.3 187.7L371.7 187.0L385.5 175.6L394.9 169.7L396.6 173.9L395.9 184.3L409.8 189.5L423.6 196.4L434.0 203.3L439.2 211.3L434.0 211.3L423.6 206.8L413.3 204.4L402.9 203.3L378.6 212.0L347.4 215.4L329.4 225.6L322.1 228.4L313.0 232.9L303.9 238.4L294.7 245.7L285.6 254.8L276.5 265.8L270.1 272.2L264.6 275.3L261.9 271.2L261.0 262.0L259.2 252.0L254.6 243.9L250.0 234.7Z" fill="#2b0606" stroke="#2b0606" stroke-width="1" stroke-linejoin="round"/><g clip-path="url(#cLu)"><g filter="url(#b1)"><path d="M255 234L262 232.5 272 231.5 284 225 296 216 307 209.5 322 204 332 201.5 332 222.5 322 226.5 313 230.5 304 236 295 243 286 252 277 263 270 269.5 266 271 264.5 262 262.8 252 259 244z" fill="url(#gL)"/></g><g filter="url(#b2)"><ellipse cx="262" cy="240" rx="7" ry="8" fill="#2412a8" opacity="0.8"/><ellipse cx="414" cy="198.5" rx="11" ry="5" fill="#3a2a94" transform="rotate(25 414 198.5)"/></g></g><path d="M321.5 266.5C321.0 261.9 322.1 258.0 322.8 253.8C323.5 249.5 324.4 245.0 325.8 241.0C327.3 236.9 329.2 233.1 331.7 229.5C334.2 225.9 337.3 222.3 340.7 219.3C344.1 216.3 347.9 213.7 352.2 211.6C356.4 209.5 361.3 207.8 366.2 206.5C371.1 205.2 376.4 204.4 381.5 203.9C386.6 203.5 392.2 203.5 396.9 203.9C401.6 204.4 405.8 205.0 409.6 206.5C413.5 208.0 417.1 210.1 419.9 212.9C422.6 215.7 424.3 219.3 426.2 223.1C428.2 226.9 430.0 231.2 431.4 235.9C432.7 240.6 433.8 246.1 434.4 251.2C435.1 256.3 435.3 261.9 435.2 266.5C435.1 271.2 434.8 274.8 433.9 279.3C433.1 283.8 431.8 289.1 430.1 293.4C428.4 297.6 426.2 301.5 423.7 304.9C421.1 308.3 418.2 311.3 414.8 313.8C411.3 316.3 407.1 318.3 403.3 319.7C399.4 321.0 395.8 321.6 391.8 322.0C387.7 322.4 383.2 322.4 379.0 322.0C374.7 321.6 370.5 321.0 366.2 319.7C362.0 318.3 357.5 316.3 353.4 313.8C349.4 311.3 345.3 308.1 341.9 304.9C338.5 301.7 335.7 298.5 333.0 294.6C330.3 290.8 327.8 286.6 325.8 281.9C323.9 277.2 322.0 271.2 321.5 266.5Z" fill="url(#gI)"/><g clip-path="url(#cLi)" filter="url(#b2)"><ellipse cx="381" cy="313" rx="6" ry="7" fill="#0e0088" opacity="0.8"/><path d="M330 300Q378 318 428 296" fill="none" stroke="#1c06b8" stroke-width="5" opacity="0.6"/><path d="M326 240Q378 226 432 238" fill="none" stroke="#0a006c" stroke-width="6" opacity="0.5"/></g><path d="M304.1 305.5L309.3 309.0L326.6 315.9L344.0 320.1L361.3 322.2L378.6 322.9L385.5 323.5L378.6 325.6L361.3 326.3L344.0 327.0L333.6 328.1L328.4 332.6L319.7 334.3L311.0 331.5L306.5 322.9L305.8 314.2Z" fill="#2b0606" stroke="#2b0606" stroke-width="1" stroke-linejoin="round"/><path d="M546.7 267.8C546.2 264.8 546.3 261.9 546.5 258.8C546.7 255.7 547.0 252.5 547.8 249.1C548.5 245.7 549.3 242.3 550.8 238.4C552.3 234.5 554.4 229.5 556.7 225.6C559.0 221.8 561.6 218.4 564.4 215.4C567.1 212.4 569.7 209.6 573.3 207.8C576.9 206.0 581.4 205.3 586.1 204.7C590.7 204.1 595.8 203.9 601.4 203.9C606.9 204.0 613.7 204.1 619.2 205.2C624.8 206.3 629.9 208.0 634.6 210.3C639.2 212.7 643.5 215.8 647.3 219.3C651.2 222.7 654.8 226.7 657.5 230.7C660.3 234.8 662.2 238.8 663.9 243.5C665.6 248.2 667.0 254.1 667.8 258.8C668.5 263.5 668.5 267.3 668.3 271.6C668.1 275.8 667.6 280.1 666.5 284.4C665.3 288.6 663.5 293.3 661.4 297.1C659.2 300.9 656.9 304.4 653.7 307.3C650.5 310.3 646.3 312.9 642.2 315.0C638.2 317.1 634.1 318.9 629.5 320.1C624.8 321.2 619.2 321.8 614.1 321.9C609.0 322.0 603.7 321.7 598.8 320.6C593.9 319.5 589.3 317.7 584.8 315.5C580.3 313.3 575.8 310.4 572.0 307.3C568.2 304.3 564.7 300.7 561.8 297.1C558.9 293.5 556.4 289.0 554.4 285.6C552.4 282.2 550.8 279.7 549.6 276.7C548.3 273.7 547.3 270.7 546.7 267.8Z" fill="url(#gI)"/><g clip-path="url(#cRi)" filter="url(#b2)"><path d="M552 298Q607 318 664 294" fill="none" stroke="#1c06b8" stroke-width="5" opacity="0.6"/><path d="M550 238Q607 224 666 238" fill="none" stroke="#0a006c" stroke-width="6" opacity="0.5"/></g><path d="M542.3 211.8L543.8 207.4L549.6 201.6L556.9 196.5L567.1 191.4L578.8 188.5L587.6 187.0L588.7 171.7L591.2 172.0L600.7 179.0L613.8 187.0L636.5 188.8L651.1 192.4L665.7 197.5L680.3 204.1L696.2 214.1L708.2 223.2L716.3 228.2L726.3 226.6L736.3 226.6L746.4 229.2L749.0 231.8L746.4 238.2L741.4 246.3L735.3 254.3L736.3 262.3L734.3 270.4L731.3 276.4L726.3 274.4L718.3 266.3L708.2 256.3L700.0 248.6L687.6 241.3L677.4 235.5L665.7 229.6L658.4 225.3L648.2 220.1L635.0 215.0L623.4 211.5L613.8 207.6L602.2 205.3L593.4 206.0L583.2 206.7L573.0 207.4L564.2 206.7L555.4 207.4L549.6 210.4L545.2 213.3Z" fill="#2b0606" stroke="#2b0606" stroke-width="1" stroke-linejoin="round"/><g clip-path="url(#cRu)"><g filter="url(#b1)"><path d="M672 207L684 211.5 696 219.5 708 228.5 716.5 233 726.5 231.5 736 231.5 743.5 233.5 742 238.5 738.5 246 732.5 254 733.5 262 731.5 270 729.5 272.5 726 271.5 718 263.5 708 253.5 698 245.5 686 238.5 674 232 664 226z" fill="url(#gR)"/><path d="M549.5 205L557 199 567 194 579 191 592 190 600 193 603 203.5 593 204.5 583 205 573 205.8 564 205 555.5 205.6 550 207.5z" fill="url(#gR2)"/></g></g><path d="M687.5 307.3L685.7 314.2L684.0 326.3L678.8 332.6L670.1 334.3L661.5 332.2L656.3 328.7L639.0 328.7L621.6 328.1L604.3 326.3L600.8 324.6L604.3 322.9L621.6 322.2L639.0 321.1L656.3 317.7L673.6 312.5Z" fill="#2b0606" stroke="#2b0606" stroke-width="1" stroke-linejoin="round"/><ellipse cx="281.5" cy="393" rx="18.6" ry="21.7" fill="#1606aa" transform="rotate(-8 281.5 393)"/><ellipse cx="338.5" cy="392" rx="19.3" ry="21" fill="#130598"/><ellipse cx="390.2" cy="388" rx="19.6" ry="22.2" fill="#0f0384" transform="rotate(-8 390.2 388)"/><ellipse cx="437.5" cy="385" rx="18.6" ry="21.7" fill="#0b025c" transform="rotate(-10 437.5 385)"/><path d="M302 396.6L312 396.6M309.3 391Q315 393 316.3 395.2Q315 398 310.4 401" fill="none" stroke="#560c0c" stroke-width="2.3" stroke-linecap="round" stroke-linejoin="round"/><path d="M359.8 392.3L366.5 391.9M366.8 387.8Q372.5 390.5 371.8 394Q370 400.5 362.8 405" fill="none" stroke="#560c0c" stroke-width="2.3" stroke-linecap="round" stroke-linejoin="round"/><path d="M410 387.4L419 387.4M416 382.8Q419.5 385 420 387.4Q419.5 390 416 392.8" fill="none" stroke="#560c0c" stroke-width="2.3" stroke-linecap="round" stroke-linejoin="round"/></g><use href="#artg" transform="translate(814.1 107.2) scale(0.2113)"/></svg>
<div class="a" style="left:856.8px;top:122.8px;width:125.4px;height:92px;border:2px solid #d41a1a;"></div>
</body></html>
